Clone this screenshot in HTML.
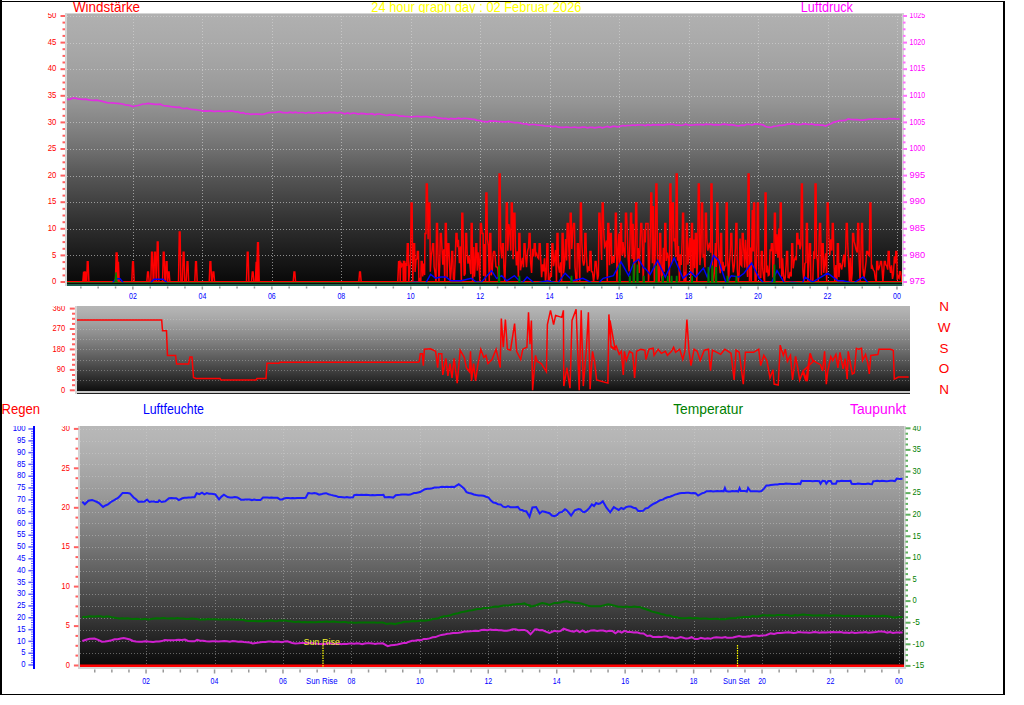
<!DOCTYPE html><html><head><meta charset="utf-8"><style>html,body{margin:0;padding:0;background:#fff;overflow:hidden}</style></head><body>
<svg width="1024" height="705" viewBox="0 0 1024 705" style="display:block">
<defs>
<linearGradient id="g1" x1="0" y1="0" x2="0" y2="1"><stop offset="0" stop-color="rgb(176,176,176)"/><stop offset="0.1" stop-color="rgb(170,170,170)"/><stop offset="0.2" stop-color="rgb(162,162,162)"/><stop offset="0.32" stop-color="rgb(150,150,150)"/><stop offset="0.42" stop-color="rgb(130,130,130)"/><stop offset="0.5" stop-color="rgb(112,112,112)"/><stop offset="0.59" stop-color="rgb(88,88,88)"/><stop offset="0.756" stop-color="rgb(52,52,52)"/><stop offset="0.9" stop-color="rgb(25,25,25)"/><stop offset="1" stop-color="rgb(8,8,8)"/></linearGradient>
<linearGradient id="g2" x1="0" y1="0" x2="0" y2="1"><stop offset="0.00" stop-color="rgb(182,182,182)"/><stop offset="0.05" stop-color="rgb(178,178,178)"/><stop offset="0.10" stop-color="rgb(173,173,173)"/><stop offset="0.15" stop-color="rgb(167,167,167)"/><stop offset="0.20" stop-color="rgb(161,161,161)"/><stop offset="0.25" stop-color="rgb(154,154,154)"/><stop offset="0.30" stop-color="rgb(146,146,146)"/><stop offset="0.35" stop-color="rgb(139,139,139)"/><stop offset="0.40" stop-color="rgb(130,130,130)"/><stop offset="0.45" stop-color="rgb(122,122,122)"/><stop offset="0.50" stop-color="rgb(113,113,113)"/><stop offset="0.55" stop-color="rgb(104,104,104)"/><stop offset="0.60" stop-color="rgb(95,95,95)"/><stop offset="0.65" stop-color="rgb(86,86,86)"/><stop offset="0.70" stop-color="rgb(76,76,76)"/><stop offset="0.75" stop-color="rgb(66,66,66)"/><stop offset="0.80" stop-color="rgb(56,56,56)"/><stop offset="0.85" stop-color="rgb(45,45,45)"/><stop offset="0.90" stop-color="rgb(35,35,35)"/><stop offset="0.95" stop-color="rgb(24,24,24)"/><stop offset="1.00" stop-color="rgb(14,14,14)"/></linearGradient>
<linearGradient id="g3" x1="0" y1="0" x2="0" y2="1"><stop offset="0.00" stop-color="rgb(184,184,184)"/><stop offset="0.05" stop-color="rgb(181,181,181)"/><stop offset="0.10" stop-color="rgb(176,176,176)"/><stop offset="0.15" stop-color="rgb(171,171,171)"/><stop offset="0.20" stop-color="rgb(165,165,165)"/><stop offset="0.25" stop-color="rgb(158,158,158)"/><stop offset="0.30" stop-color="rgb(151,151,151)"/><stop offset="0.35" stop-color="rgb(143,143,143)"/><stop offset="0.40" stop-color="rgb(135,135,135)"/><stop offset="0.45" stop-color="rgb(126,126,126)"/><stop offset="0.50" stop-color="rgb(117,117,117)"/><stop offset="0.55" stop-color="rgb(107,107,107)"/><stop offset="0.60" stop-color="rgb(97,97,97)"/><stop offset="0.65" stop-color="rgb(87,87,87)"/><stop offset="0.70" stop-color="rgb(77,77,77)"/><stop offset="0.75" stop-color="rgb(66,66,66)"/><stop offset="0.80" stop-color="rgb(55,55,55)"/><stop offset="0.85" stop-color="rgb(43,43,43)"/><stop offset="0.90" stop-color="rgb(32,32,32)"/><stop offset="0.95" stop-color="rgb(20,20,20)"/><stop offset="1.00" stop-color="rgb(8,8,8)"/></linearGradient>
<clipPath id="k1" clipPathUnits="userSpaceOnUse"><rect x="0" y="13" width="1024" height="300"/></clipPath>
<clipPath id="k2" clipPathUnits="userSpaceOnUse"><rect x="0" y="306" width="1024" height="100"/></clipPath>
<clipPath id="k3" clipPathUnits="userSpaceOnUse"><rect x="0" y="426" width="1024" height="270"/></clipPath>
<clipPath id="c1"><rect x="67" y="13" width="835" height="270"/></clipPath>
<clipPath id="c2"><rect x="77" y="306" width="833" height="85"/></clipPath>
<clipPath id="c3"><rect x="80" y="426" width="824" height="241"/></clipPath>
</defs>
<rect x="0" y="0" width="1024" height="705" fill="#fff"/>
<text x="72.9" y="12" fill="#ff0000" font-size="14.2" text-anchor="start" textLength="67.2" lengthAdjust="spacingAndGlyphs" font-family="Liberation Sans, sans-serif">Windstärke</text>
<text x="371.25" y="12" fill="#ffff00" font-size="14.2" text-anchor="start" textLength="210.25" lengthAdjust="spacingAndGlyphs" font-family="Liberation Sans, sans-serif">24 hour graph day : 02 Februar 2026</text>
<text x="800.8" y="12" fill="#ff00ff" font-size="14.2" text-anchor="start" textLength="52.1" lengthAdjust="spacingAndGlyphs" font-family="Liberation Sans, sans-serif">Luftdruck</text>
<rect x="65" y="13" width="839" height="273" fill="#d4d4d4"/>
<rect x="67" y="14" width="835" height="270" fill="url(#g1)"/>
<rect x="67" y="284" width="835" height="2" fill="#1b5e4e"/>
<g opacity="0.6">
<line x1="67" y1="255.5" x2="902" y2="255.5" stroke="#d8d8d8" stroke-dasharray="1 2"/>
<line x1="67" y1="229.5" x2="902" y2="229.5" stroke="#d8d8d8" stroke-dasharray="1 2"/>
<line x1="67" y1="202.5" x2="902" y2="202.5" stroke="#d8d8d8" stroke-dasharray="1 2"/>
<line x1="67" y1="176.5" x2="902" y2="176.5" stroke="#d8d8d8" stroke-dasharray="1 2"/>
<line x1="67" y1="149.5" x2="902" y2="149.5" stroke="#d8d8d8" stroke-dasharray="1 2"/>
<line x1="67" y1="122.5" x2="902" y2="122.5" stroke="#d8d8d8" stroke-dasharray="1 2"/>
<line x1="67" y1="96.5" x2="902" y2="96.5" stroke="#d8d8d8" stroke-dasharray="1 2"/>
<line x1="67" y1="69.5" x2="902" y2="69.5" stroke="#d8d8d8" stroke-dasharray="1 2"/>
<line x1="67" y1="43.5" x2="902" y2="43.5" stroke="#d8d8d8" stroke-dasharray="1 2"/>
<line x1="67" y1="16.5" x2="902" y2="16.5" stroke="#d8d8d8" stroke-dasharray="1 2"/>
<line x1="133.5" y1="13" x2="133.5" y2="283" stroke="#d8d8d8" stroke-dasharray="1 2"/>
<line x1="202.5" y1="13" x2="202.5" y2="283" stroke="#d8d8d8" stroke-dasharray="1 2"/>
<line x1="272.5" y1="13" x2="272.5" y2="283" stroke="#d8d8d8" stroke-dasharray="1 2"/>
<line x1="341.5" y1="13" x2="341.5" y2="283" stroke="#d8d8d8" stroke-dasharray="1 2"/>
<line x1="411.5" y1="13" x2="411.5" y2="283" stroke="#d8d8d8" stroke-dasharray="1 2"/>
<line x1="480.5" y1="13" x2="480.5" y2="283" stroke="#d8d8d8" stroke-dasharray="1 2"/>
<line x1="550.5" y1="13" x2="550.5" y2="283" stroke="#d8d8d8" stroke-dasharray="1 2"/>
<line x1="619.5" y1="13" x2="619.5" y2="283" stroke="#d8d8d8" stroke-dasharray="1 2"/>
<line x1="689.5" y1="13" x2="689.5" y2="283" stroke="#d8d8d8" stroke-dasharray="1 2"/>
<line x1="758.5" y1="13" x2="758.5" y2="283" stroke="#d8d8d8" stroke-dasharray="1 2"/>
<line x1="828.5" y1="13" x2="828.5" y2="283" stroke="#d8d8d8" stroke-dasharray="1 2"/>
<line x1="897.5" y1="13" x2="897.5" y2="283" stroke="#d8d8d8" stroke-dasharray="1 2"/>
</g>
<g fill="#ff6060">
<rect x="60.5" y="281.0" width="4.5" height="2"/>
<rect x="62.5" y="274.4" width="2.5" height="2"/>
<rect x="62.5" y="267.7" width="2.5" height="2"/>
<rect x="62.5" y="261.1" width="2.5" height="2"/>
<rect x="60.5" y="254.4" width="4.5" height="2"/>
<rect x="62.5" y="247.8" width="2.5" height="2"/>
<rect x="62.5" y="241.1" width="2.5" height="2"/>
<rect x="62.5" y="234.4" width="2.5" height="2"/>
<rect x="60.5" y="227.8" width="4.5" height="2"/>
<rect x="62.5" y="221.2" width="2.5" height="2"/>
<rect x="62.5" y="214.5" width="2.5" height="2"/>
<rect x="62.5" y="207.8" width="2.5" height="2"/>
<rect x="60.5" y="201.2" width="4.5" height="2"/>
<rect x="62.5" y="194.6" width="2.5" height="2"/>
<rect x="62.5" y="187.9" width="2.5" height="2"/>
<rect x="62.5" y="181.2" width="2.5" height="2"/>
<rect x="60.5" y="174.6" width="4.5" height="2"/>
<rect x="62.5" y="167.9" width="2.5" height="2"/>
<rect x="62.5" y="161.3" width="2.5" height="2"/>
<rect x="62.5" y="154.6" width="2.5" height="2"/>
<rect x="60.5" y="148.0" width="4.5" height="2"/>
<rect x="62.5" y="141.3" width="2.5" height="2"/>
<rect x="62.5" y="134.7" width="2.5" height="2"/>
<rect x="62.5" y="128.0" width="2.5" height="2"/>
<rect x="60.5" y="121.4" width="4.5" height="2"/>
<rect x="62.5" y="114.8" width="2.5" height="2"/>
<rect x="62.5" y="108.1" width="2.5" height="2"/>
<rect x="62.5" y="101.4" width="2.5" height="2"/>
<rect x="60.5" y="94.8" width="4.5" height="2"/>
<rect x="62.5" y="88.1" width="2.5" height="2"/>
<rect x="62.5" y="81.5" width="2.5" height="2"/>
<rect x="62.5" y="74.8" width="2.5" height="2"/>
<rect x="60.5" y="68.2" width="4.5" height="2"/>
<rect x="62.5" y="61.5" width="2.5" height="2"/>
<rect x="62.5" y="54.9" width="2.5" height="2"/>
<rect x="62.5" y="48.2" width="2.5" height="2"/>
<rect x="60.5" y="41.6" width="4.5" height="2"/>
<rect x="62.5" y="34.9" width="2.5" height="2"/>
<rect x="62.5" y="28.3" width="2.5" height="2"/>
<rect x="62.5" y="21.6" width="2.5" height="2"/>
<rect x="60.5" y="15.0" width="4.5" height="2"/>
</g>
<g fill="#ff70ff">
<rect x="903" y="281.0" width="4" height="2"/>
<rect x="903" y="274.4" width="2.5" height="2"/>
<rect x="903" y="267.7" width="2.5" height="2"/>
<rect x="903" y="261.1" width="2.5" height="2"/>
<rect x="903" y="254.4" width="4" height="2"/>
<rect x="903" y="247.8" width="2.5" height="2"/>
<rect x="903" y="241.1" width="2.5" height="2"/>
<rect x="903" y="234.4" width="2.5" height="2"/>
<rect x="903" y="227.8" width="4" height="2"/>
<rect x="903" y="221.2" width="2.5" height="2"/>
<rect x="903" y="214.5" width="2.5" height="2"/>
<rect x="903" y="207.8" width="2.5" height="2"/>
<rect x="903" y="201.2" width="4" height="2"/>
<rect x="903" y="194.6" width="2.5" height="2"/>
<rect x="903" y="187.9" width="2.5" height="2"/>
<rect x="903" y="181.2" width="2.5" height="2"/>
<rect x="903" y="174.6" width="4" height="2"/>
<rect x="903" y="167.9" width="2.5" height="2"/>
<rect x="903" y="161.3" width="2.5" height="2"/>
<rect x="903" y="154.6" width="2.5" height="2"/>
<rect x="903" y="148.0" width="4" height="2"/>
<rect x="903" y="141.3" width="2.5" height="2"/>
<rect x="903" y="134.7" width="2.5" height="2"/>
<rect x="903" y="128.0" width="2.5" height="2"/>
<rect x="903" y="121.4" width="4" height="2"/>
<rect x="903" y="114.8" width="2.5" height="2"/>
<rect x="903" y="108.1" width="2.5" height="2"/>
<rect x="903" y="101.4" width="2.5" height="2"/>
<rect x="903" y="94.8" width="4" height="2"/>
<rect x="903" y="88.1" width="2.5" height="2"/>
<rect x="903" y="81.5" width="2.5" height="2"/>
<rect x="903" y="74.8" width="2.5" height="2"/>
<rect x="903" y="68.2" width="4" height="2"/>
<rect x="903" y="61.5" width="2.5" height="2"/>
<rect x="903" y="54.9" width="2.5" height="2"/>
<rect x="903" y="48.2" width="2.5" height="2"/>
<rect x="903" y="41.6" width="4" height="2"/>
<rect x="903" y="34.9" width="2.5" height="2"/>
<rect x="903" y="28.3" width="2.5" height="2"/>
<rect x="903" y="21.6" width="2.5" height="2"/>
<rect x="903" y="15.0" width="4" height="2"/>
</g>
<text x="56.4" y="284.2" fill="#ff0000" font-size="9.2" text-anchor="end" textLength="4.35" lengthAdjust="spacingAndGlyphs" font-family="Liberation Sans, sans-serif" clip-path="url(#k1)">0</text>
<text x="909.6" y="284.2" fill="#ff00ff" font-size="9.2" text-anchor="start" textLength="15.5" lengthAdjust="spacingAndGlyphs" font-family="Liberation Sans, sans-serif" clip-path="url(#k1)">975</text>
<text x="56.4" y="257.6" fill="#ff0000" font-size="9.2" text-anchor="end" textLength="4.35" lengthAdjust="spacingAndGlyphs" font-family="Liberation Sans, sans-serif" clip-path="url(#k1)">5</text>
<text x="909.6" y="257.6" fill="#ff00ff" font-size="9.2" text-anchor="start" textLength="15.5" lengthAdjust="spacingAndGlyphs" font-family="Liberation Sans, sans-serif" clip-path="url(#k1)">980</text>
<text x="56.4" y="231.0" fill="#ff0000" font-size="9.2" text-anchor="end" textLength="8.7" lengthAdjust="spacingAndGlyphs" font-family="Liberation Sans, sans-serif" clip-path="url(#k1)">10</text>
<text x="909.6" y="231.0" fill="#ff00ff" font-size="9.2" text-anchor="start" textLength="15.5" lengthAdjust="spacingAndGlyphs" font-family="Liberation Sans, sans-serif" clip-path="url(#k1)">985</text>
<text x="56.4" y="204.4" fill="#ff0000" font-size="9.2" text-anchor="end" textLength="8.7" lengthAdjust="spacingAndGlyphs" font-family="Liberation Sans, sans-serif" clip-path="url(#k1)">15</text>
<text x="909.6" y="204.4" fill="#ff00ff" font-size="9.2" text-anchor="start" textLength="15.5" lengthAdjust="spacingAndGlyphs" font-family="Liberation Sans, sans-serif" clip-path="url(#k1)">990</text>
<text x="56.4" y="177.8" fill="#ff0000" font-size="9.2" text-anchor="end" textLength="8.7" lengthAdjust="spacingAndGlyphs" font-family="Liberation Sans, sans-serif" clip-path="url(#k1)">20</text>
<text x="909.6" y="177.8" fill="#ff00ff" font-size="9.2" text-anchor="start" textLength="15.5" lengthAdjust="spacingAndGlyphs" font-family="Liberation Sans, sans-serif" clip-path="url(#k1)">995</text>
<text x="56.4" y="151.2" fill="#ff0000" font-size="9.2" text-anchor="end" textLength="8.7" lengthAdjust="spacingAndGlyphs" font-family="Liberation Sans, sans-serif" clip-path="url(#k1)">25</text>
<text x="909.6" y="151.2" fill="#ff00ff" font-size="9.2" text-anchor="start" textLength="15.5" lengthAdjust="spacingAndGlyphs" font-family="Liberation Sans, sans-serif" clip-path="url(#k1)">1000</text>
<text x="56.4" y="124.6" fill="#ff0000" font-size="9.2" text-anchor="end" textLength="8.7" lengthAdjust="spacingAndGlyphs" font-family="Liberation Sans, sans-serif" clip-path="url(#k1)">30</text>
<text x="909.6" y="124.6" fill="#ff00ff" font-size="9.2" text-anchor="start" textLength="15.5" lengthAdjust="spacingAndGlyphs" font-family="Liberation Sans, sans-serif" clip-path="url(#k1)">1005</text>
<text x="56.4" y="98.0" fill="#ff0000" font-size="9.2" text-anchor="end" textLength="8.7" lengthAdjust="spacingAndGlyphs" font-family="Liberation Sans, sans-serif" clip-path="url(#k1)">35</text>
<text x="909.6" y="98.0" fill="#ff00ff" font-size="9.2" text-anchor="start" textLength="15.5" lengthAdjust="spacingAndGlyphs" font-family="Liberation Sans, sans-serif" clip-path="url(#k1)">1010</text>
<text x="56.4" y="71.4" fill="#ff0000" font-size="9.2" text-anchor="end" textLength="8.7" lengthAdjust="spacingAndGlyphs" font-family="Liberation Sans, sans-serif" clip-path="url(#k1)">40</text>
<text x="909.6" y="71.4" fill="#ff00ff" font-size="9.2" text-anchor="start" textLength="15.5" lengthAdjust="spacingAndGlyphs" font-family="Liberation Sans, sans-serif" clip-path="url(#k1)">1015</text>
<text x="56.4" y="44.8" fill="#ff0000" font-size="9.2" text-anchor="end" textLength="8.7" lengthAdjust="spacingAndGlyphs" font-family="Liberation Sans, sans-serif" clip-path="url(#k1)">45</text>
<text x="909.6" y="44.8" fill="#ff00ff" font-size="9.2" text-anchor="start" textLength="15.5" lengthAdjust="spacingAndGlyphs" font-family="Liberation Sans, sans-serif" clip-path="url(#k1)">1020</text>
<text x="56.4" y="18.2" fill="#ff0000" font-size="9.2" text-anchor="end" textLength="8.7" lengthAdjust="spacingAndGlyphs" font-family="Liberation Sans, sans-serif" clip-path="url(#k1)">50</text>
<text x="909.6" y="18.2" fill="#ff00ff" font-size="9.2" text-anchor="start" textLength="15.5" lengthAdjust="spacingAndGlyphs" font-family="Liberation Sans, sans-serif" clip-path="url(#k1)">1025</text>
<g fill="#999">
<rect x="80.1" y="286.5" width="1.5" height="2"/>
<rect x="97.4" y="286.5" width="1.5" height="2"/>
<rect x="114.8" y="286.5" width="1.5" height="2"/>
<rect x="132.1" y="286.5" width="1.5" height="3"/>
<rect x="149.5" y="286.5" width="1.5" height="2"/>
<rect x="166.9" y="286.5" width="1.5" height="2"/>
<rect x="184.2" y="286.5" width="1.5" height="2"/>
<rect x="201.6" y="286.5" width="1.5" height="3"/>
<rect x="219.0" y="286.5" width="1.5" height="2"/>
<rect x="236.3" y="286.5" width="1.5" height="2"/>
<rect x="253.7" y="286.5" width="1.5" height="2"/>
<rect x="271.1" y="286.5" width="1.5" height="3"/>
<rect x="288.4" y="286.5" width="1.5" height="2"/>
<rect x="305.8" y="286.5" width="1.5" height="2"/>
<rect x="323.2" y="286.5" width="1.5" height="2"/>
<rect x="340.5" y="286.5" width="1.5" height="3"/>
<rect x="357.9" y="286.5" width="1.5" height="2"/>
<rect x="375.3" y="286.5" width="1.5" height="2"/>
<rect x="392.6" y="286.5" width="1.5" height="2"/>
<rect x="410.0" y="286.5" width="1.5" height="3"/>
<rect x="427.4" y="286.5" width="1.5" height="2"/>
<rect x="444.7" y="286.5" width="1.5" height="2"/>
<rect x="462.1" y="286.5" width="1.5" height="2"/>
<rect x="479.4" y="286.5" width="1.5" height="3"/>
<rect x="496.8" y="286.5" width="1.5" height="2"/>
<rect x="514.2" y="286.5" width="1.5" height="2"/>
<rect x="531.5" y="286.5" width="1.5" height="2"/>
<rect x="548.9" y="286.5" width="1.5" height="3"/>
<rect x="566.3" y="286.5" width="1.5" height="2"/>
<rect x="583.6" y="286.5" width="1.5" height="2"/>
<rect x="601.0" y="286.5" width="1.5" height="2"/>
<rect x="618.4" y="286.5" width="1.5" height="3"/>
<rect x="635.7" y="286.5" width="1.5" height="2"/>
<rect x="653.1" y="286.5" width="1.5" height="2"/>
<rect x="670.5" y="286.5" width="1.5" height="2"/>
<rect x="687.8" y="286.5" width="1.5" height="3"/>
<rect x="705.2" y="286.5" width="1.5" height="2"/>
<rect x="722.6" y="286.5" width="1.5" height="2"/>
<rect x="739.9" y="286.5" width="1.5" height="2"/>
<rect x="757.3" y="286.5" width="1.5" height="3"/>
<rect x="774.7" y="286.5" width="1.5" height="2"/>
<rect x="792.0" y="286.5" width="1.5" height="2"/>
<rect x="809.4" y="286.5" width="1.5" height="2"/>
<rect x="826.8" y="286.5" width="1.5" height="3"/>
<rect x="844.1" y="286.5" width="1.5" height="2"/>
<rect x="861.5" y="286.5" width="1.5" height="2"/>
<rect x="878.8" y="286.5" width="1.5" height="2"/>
<rect x="896.2" y="286.5" width="1.5" height="3"/>
</g>
<text x="132.9" y="299" fill="#0000ff" font-size="9.2" text-anchor="middle" textLength="7.8" lengthAdjust="spacingAndGlyphs" font-family="Liberation Sans, sans-serif">02</text>
<text x="202.4" y="299" fill="#0000ff" font-size="9.2" text-anchor="middle" textLength="7.8" lengthAdjust="spacingAndGlyphs" font-family="Liberation Sans, sans-serif">04</text>
<text x="271.8" y="299" fill="#0000ff" font-size="9.2" text-anchor="middle" textLength="7.8" lengthAdjust="spacingAndGlyphs" font-family="Liberation Sans, sans-serif">06</text>
<text x="341.3" y="299" fill="#0000ff" font-size="9.2" text-anchor="middle" textLength="7.8" lengthAdjust="spacingAndGlyphs" font-family="Liberation Sans, sans-serif">08</text>
<text x="410.7" y="299" fill="#0000ff" font-size="9.2" text-anchor="middle" textLength="7.8" lengthAdjust="spacingAndGlyphs" font-family="Liberation Sans, sans-serif">10</text>
<text x="480.2" y="299" fill="#0000ff" font-size="9.2" text-anchor="middle" textLength="7.8" lengthAdjust="spacingAndGlyphs" font-family="Liberation Sans, sans-serif">12</text>
<text x="549.7" y="299" fill="#0000ff" font-size="9.2" text-anchor="middle" textLength="7.8" lengthAdjust="spacingAndGlyphs" font-family="Liberation Sans, sans-serif">14</text>
<text x="619.1" y="299" fill="#0000ff" font-size="9.2" text-anchor="middle" textLength="7.8" lengthAdjust="spacingAndGlyphs" font-family="Liberation Sans, sans-serif">16</text>
<text x="688.6" y="299" fill="#0000ff" font-size="9.2" text-anchor="middle" textLength="7.8" lengthAdjust="spacingAndGlyphs" font-family="Liberation Sans, sans-serif">18</text>
<text x="758.0" y="299" fill="#0000ff" font-size="9.2" text-anchor="middle" textLength="7.8" lengthAdjust="spacingAndGlyphs" font-family="Liberation Sans, sans-serif">20</text>
<text x="827.5" y="299" fill="#0000ff" font-size="9.2" text-anchor="middle" textLength="7.8" lengthAdjust="spacingAndGlyphs" font-family="Liberation Sans, sans-serif">22</text>
<text x="897.0" y="299" fill="#0000ff" font-size="9.2" text-anchor="middle" textLength="7.8" lengthAdjust="spacingAndGlyphs" font-family="Liberation Sans, sans-serif">00</text>
<g clip-path="url(#c1)">
<polyline points="67.0,282.0 82.8,282.0 83.6,271.9 84.3,282.0 84.4,271.9 85.1,271.9 85.2,282.0 85.9,271.9 86.5,282.0 86.7,282.0 87.3,261.8 88.1,261.8 88.9,282.0 115.4,282.0 116.2,252.2 116.8,282.0 117.0,252.2 117.6,261.8 117.8,282.0 118.4,261.8 119.2,282.0 131.8,282.0 132.6,261.8 133.4,261.8 134.2,282.0 146.8,282.0 147.6,271.9 148.4,271.9 149.2,282.0 150.8,282.0 151.6,252.2 152.4,252.2 153.2,282.0 153.8,282.0 154.6,252.2 155.4,252.2 156.2,282.0 156.5,282.0 157.3,242.1 158.1,242.1 158.9,282.0 162.5,282.0 163.3,252.2 164.1,252.2 164.9,282.0 165.4,282.0 166.2,261.8 167.0,261.8 167.5,282.0 167.8,282.0 168.3,271.9 169.1,271.9 169.9,282.0 178.5,282.0 179.3,232.0 180.1,232.0 180.9,282.0 182.4,282.0 183.2,252.2 184.0,252.2 184.8,282.0 186.3,282.0 187.1,261.8 187.9,261.8 188.7,282.0 194.8,282.0 195.6,261.8 196.4,261.8 197.2,282.0 209.2,282.0 210.0,261.8 210.8,261.8 211.6,282.0 212.2,282.0 213.0,271.9 213.8,271.9 214.6,282.0 246.5,282.0 247.3,252.2 248.1,252.2 248.9,282.0 251.5,282.0 252.3,271.9 253.1,271.9 253.9,282.0 255.4,282.0 256.2,261.8 256.8,282.0 257.0,261.8 257.6,242.1 257.8,282.0 258.4,242.1 259.2,282.0 293.2,282.0 294.0,271.9 294.8,271.9 295.6,282.0 358.8,282.0 359.6,271.9 360.4,271.9 361.2,282.0 365.0,282.0 397.0,282.0 397.8,282.0 398.6,261.8 399.4,261.8 399.7,261.5 400.2,282.0 400.7,261.5 401.1,267.5 402.1,264.1 403.0,264.5 403.3,282.0 403.5,261.5 404.1,261.8 404.5,261.5 404.9,261.8 404.9,282.0 405.7,282.0 405.9,264.1 406.8,264.8 407.3,243.8 408.3,243.8 408.7,282.0 409.7,270.4 410.6,260.2 411.1,203.1 412.1,203.1 412.8,282.0 413.6,243.8 414.6,243.8 415.1,271.9 416.0,259.7 417.0,258.9 417.4,251.4 418.4,251.4 418.9,282.0 419.8,277.8 420.8,282.0 421.2,261.5 422.2,261.5 422.7,276.4 423.6,263.5 424.6,275.1 425.0,233.6 426.0,233.6 426.3,184.1 427.3,184.1 428.1,239.2 428.8,203.1 429.8,203.1 430.3,271.8 431.2,256.5 432.2,250.1 432.6,243.8 433.6,243.8 434.1,266.8 435.1,273.6 436.0,282.0 436.5,223.5 437.5,223.5 437.9,253.2 438.9,282.0 439.8,263.8 440.3,233.6 441.3,233.6 441.8,244.7 442.8,264.6 443.8,249.2 444.8,282.0 445.3,223.5 446.3,223.5 447.1,277.5 447.9,243.8 448.9,243.8 449.3,257.7 450.3,282.0 451.2,269.7 451.7,251.4 452.7,251.4 453.3,278.7 454.3,282.0 455.4,254.9 456.0,233.6 457.0,233.6 457.5,247.2 458.4,239.8 459.4,263.1 460.4,246.4 461.4,282.0 461.8,213.3 462.8,213.3 463.3,245.5 464.2,275.7 465.2,273.5 465.6,233.6 466.6,233.6 467.1,252.9 468.0,263.7 468.9,255.5 469.9,264.6 470.8,274.1 471.2,223.5 472.2,223.5 472.6,282.0 473.6,246.9 474.5,276.7 475.4,261.4 475.8,243.8 476.8,243.8 477.2,270.7 478.1,252.3 479.0,264.9 479.9,282.0 480.4,223.5 481.4,223.5 482.1,233.6 483.1,233.6 483.6,275.9 484.5,243.9 485.5,282.0 485.9,193.0 486.9,193.0 487.4,239.5 488.4,245.9 489.3,282.0 489.8,233.6 490.8,233.6 491.2,275.2 492.2,271.5 493.1,253.8 493.6,251.4 494.6,251.4 495.0,254.4 495.9,266.7 496.9,266.9 497.8,268.8 498.7,282.0 499.1,174.0 500.1,174.0 500.7,247.2 501.8,258.5 502.4,243.8 503.4,243.8 503.9,267.6 504.8,282.0 505.8,253.7 506.3,203.1 507.3,203.1 507.8,250.8 508.8,224.0 509.8,231.2 510.8,250.6 511.3,203.1 512.3,203.1 513.1,259.3 513.9,213.3 514.9,213.3 515.4,246.6 516.4,265.5 517.4,251.4 518.4,276.7 518.9,233.6 519.9,233.6 520.5,270.3 521.5,263.7 522.5,257.9 523.5,267.3 524.0,243.8 525.0,243.8 525.5,255.0 526.5,267.2 527.6,250.9 528.6,247.6 529.1,233.6 530.1,233.6 530.6,261.9 531.6,273.0 532.6,248.8 533.7,256.5 534.2,243.8 535.2,243.8 535.7,255.3 536.7,253.7 537.7,257.3 538.7,258.6 539.2,243.8 540.2,243.8 540.7,258.2 541.6,277.3 542.6,264.3 543.6,271.3 544.5,258.4 545.5,282.0 546.4,271.1 546.9,243.8 547.9,243.8 548.4,282.0 549.4,282.0 550.4,272.5 551.4,277.1 551.9,243.8 552.9,243.8 553.5,266.2 554.5,259.7 555.5,249.9 556.5,282.0 557.0,233.6 558.0,233.6 558.5,266.1 559.5,272.6 560.6,262.3 561.6,282.0 562.1,233.6 563.1,233.6 563.6,273.4 564.6,263.7 565.6,239.1 566.6,260.5 567.2,223.5 568.2,223.5 568.7,245.3 569.7,269.3 570.2,213.3 571.2,213.3 571.8,249.1 572.9,229.7 573.5,223.5 574.5,223.5 575.0,267.2 575.9,278.1 576.9,282.0 577.3,243.8 578.3,243.8 578.8,258.9 579.8,282.0 580.4,203.1 581.4,203.1 581.8,241.8 582.7,260.0 583.6,265.6 584.5,262.1 584.9,233.6 585.9,233.6 586.4,256.0 587.5,272.4 588.5,266.5 589.5,270.9 590.0,251.4 591.0,251.4 591.5,271.7 592.5,271.9 593.6,282.0 594.6,272.5 595.1,261.5 596.1,261.5 596.5,266.8 597.5,279.7 598.4,275.4 598.9,213.3 599.9,213.3 600.5,231.1 601.6,260.0 602.2,203.1 603.2,203.1 603.6,228.7 604.6,247.0 605.5,245.2 606.4,240.5 607.3,282.0 607.8,223.5 608.8,223.5 609.5,265.2 610.3,233.6 611.3,233.6 611.8,263.8 612.8,256.1 613.9,262.8 614.9,253.7 615.4,213.3 616.4,213.3 616.9,282.0 617.9,254.3 618.9,233.5 619.9,275.4 620.5,223.5 621.5,223.5 622.0,255.6 623.0,242.1 624.0,253.0 625.0,257.6 625.5,213.3 626.5,213.3 627.1,227.1 628.1,258.4 629.1,271.4 630.1,236.0 630.6,213.3 631.6,213.3 632.1,259.0 633.1,223.8 634.2,282.0 635.2,244.2 635.7,203.1 636.7,203.1 637.2,260.3 638.2,248.0 639.2,272.9 640.3,236.8 640.8,223.5 641.8,223.5 642.3,244.3 643.3,282.0 644.3,229.2 645.3,242.5 645.8,223.5 646.8,223.5 647.0,223.5 648.0,223.5 648.5,282.0 649.4,265.6 650.4,230.4 650.8,193.0 651.8,193.0 652.4,263.3 653.4,206.1 654.4,282.0 655.4,242.9 655.9,184.1 656.9,184.1 657.4,252.5 658.3,282.0 659.3,282.0 659.7,233.6 660.7,233.6 661.2,274.3 662.3,282.0 663.3,247.7 664.3,271.8 664.8,223.5 665.8,223.5 666.3,261.0 667.3,252.6 668.4,258.2 669.4,282.0 669.9,184.1 670.9,184.1 671.6,264.3 672.4,203.1 673.4,203.1 673.9,241.4 674.8,238.2 675.8,257.1 676.2,174.0 677.2,174.0 677.6,260.8 678.5,246.0 679.4,282.0 680.4,254.2 681.3,265.0 682.2,238.2 682.6,213.3 683.6,213.3 684.0,282.0 685.0,271.8 685.9,282.0 686.4,223.5 687.4,223.5 687.9,264.7 688.9,253.1 689.9,237.9 690.9,282.0 691.5,223.5 692.5,223.5 692.9,275.0 693.9,239.4 694.8,268.3 695.3,233.6 696.3,233.6 696.8,282.0 697.8,250.8 698.3,184.1 699.3,184.1 699.9,265.1 701.0,251.2 701.6,203.1 702.6,203.1 703.1,256.4 704.0,255.5 705.0,267.4 705.4,213.3 706.4,213.3 706.8,238.6 707.8,250.7 708.7,246.0 709.6,242.8 710.6,252.8 711.0,184.1 712.0,184.1 712.5,282.0 713.4,282.0 714.4,271.6 715.4,243.0 716.4,274.1 716.8,203.1 717.8,203.1 718.3,241.8 719.2,260.1 720.2,273.2 720.6,233.6 721.6,233.6 722.1,270.8 723.0,261.9 723.9,271.1 724.9,266.2 725.8,265.8 726.2,203.1 727.2,203.1 727.6,258.0 728.6,282.0 729.5,262.5 730.4,249.9 730.8,233.6 731.8,233.6 732.3,258.4 733.3,272.5 734.3,265.6 735.4,248.2 735.9,223.5 736.9,223.5 737.3,269.2 738.2,282.0 739.1,274.1 740.0,238.5 740.9,264.8 741.8,265.9 742.2,233.6 743.2,233.6 743.7,248.7 744.7,267.6 745.6,239.8 746.6,260.1 747.6,276.9 748.1,174.0 749.1,174.0 749.5,282.0 750.4,247.6 751.3,282.0 752.3,210.1 753.2,251.5 753.6,203.1 754.6,203.1 755.1,282.0 756.0,282.0 757.0,242.4 757.4,203.1 758.4,203.1 758.9,277.6 759.8,277.7 760.8,277.4 761.3,251.4 762.3,251.4 762.7,268.7 763.7,277.6 764.6,282.0 765.1,193.0 766.1,193.0 766.5,272.6 767.4,265.6 768.3,275.5 769.2,274.8 770.1,249.3 771.0,251.3 771.4,243.8 772.4,243.8 772.9,277.6 773.9,262.9 774.4,213.3 775.4,213.3 775.9,253.9 776.9,234.3 777.9,257.8 778.8,228.6 779.8,268.6 780.3,203.1 781.3,203.1 781.7,276.7 782.6,258.4 783.5,275.7 784.4,282.0 785.3,276.8 786.2,264.4 786.6,251.4 787.6,251.4 788.1,277.4 789.2,277.7 790.2,271.8 791.2,276.5 791.7,243.8 792.7,243.8 793.2,268.3 794.2,260.7 795.3,257.7 796.3,260.2 796.8,233.6 797.8,233.6 798.2,244.7 799.1,239.3 800.0,249.3 800.9,244.9 801.4,184.1 802.4,184.1 802.9,269.9 803.9,282.0 804.9,263.5 805.9,262.4 806.4,223.5 807.4,223.5 807.9,282.0 809.0,260.7 809.5,243.8 810.5,243.8 810.9,282.0 811.8,282.0 812.8,282.0 813.7,251.2 814.6,259.0 815.1,184.1 816.1,184.1 816.5,255.6 817.4,260.3 818.3,282.0 819.2,236.4 819.6,223.5 820.6,223.5 821.4,275.2 822.2,243.8 823.2,243.8 823.7,272.8 824.7,264.2 825.7,253.3 826.7,282.0 827.2,203.1 828.2,203.1 828.8,232.2 829.8,255.3 830.8,239.3 831.8,250.6 832.3,223.5 833.3,223.5 833.8,259.5 834.8,282.0 835.9,265.0 836.9,282.0 837.4,243.8 838.4,243.8 838.9,277.1 839.9,263.1 840.9,265.9 841.8,269.5 842.8,260.5 843.8,254.6 844.8,267.1 845.8,247.4 846.3,223.5 847.3,223.5 847.7,243.4 848.6,261.3 849.5,282.0 850.4,257.7 851.3,282.0 852.2,273.2 852.6,233.6 853.6,233.6 854.1,241.4 855.2,245.5 856.2,250.1 857.2,252.4 857.7,223.5 858.7,223.5 859.1,258.1 860.1,282.0 861.1,248.0 861.5,223.5 862.5,223.5 863.0,269.2 864.0,278.3 865.1,269.3 866.1,261.3 866.6,251.4 867.6,251.4 868.2,254.3 869.3,255.7 869.9,203.1 870.9,203.1 871.4,268.7 872.3,266.5 873.3,270.0 874.3,271.2 875.3,278.6 876.3,282.0 876.7,261.5 877.7,261.5 878.2,270.2 879.1,268.0 880.1,264.4 880.5,261.5 881.5,261.5 882.0,267.9 882.9,282.0 883.9,268.7 884.3,261.5 885.3,261.5 885.8,264.9 886.8,265.9 887.7,269.7 888.2,251.4 889.2,251.4 889.6,266.0 890.6,272.9 891.5,265.3 892.5,278.9 893.4,274.5 894.4,256.3 895.3,263.5 895.8,251.4 896.8,251.4 897.2,280.0 898.2,276.3 899.1,277.8 899.6,271.7 900.6,271.7 902.0,282.0" fill="none" stroke="#ff0000" stroke-width="1.5"/>
<rect x="67" y="281" width="835" height="2" fill="#ff0000"/>
<polyline points="67.0,283.5 112.0,283.5 116.0,278.7 120.0,278.7 124.0,283.5 150.0,283.5 154.0,279.2 163.0,279.2 168.0,283.5 398.0,283.5 405.2,283.5 415.4,282.1 425.5,283.5 430.6,274.4 435.7,278.3 440.8,277.0 445.8,277.0 450.9,280.8 461.1,280.8 471.2,278.3 476.3,282.1 481.4,282.1 491.5,270.6 496.6,278.3 501.7,275.7 506.8,280.8 514.4,275.7 522.0,283.3 527.1,277.0 534.7,283.5 547.4,280.8 557.5,283.3 565.1,273.2 572.7,280.8 582.9,278.3 593.0,283.3 598.1,283.5 603.2,278.3 613.4,275.7 621.0,261.8 628.6,275.7 633.7,263.0 638.7,259.2 643.8,268.1 645.0,268.1 650.1,274.4 657.7,260.5 665.3,277.0 674.2,257.9 683.1,278.3 690.7,271.9 695.8,277.0 703.4,268.1 707.2,277.0 713.5,255.4 718.6,260.5 726.2,283.3 731.3,275.7 738.9,277.0 744.0,273.2 751.6,263.0 759.2,278.3 764.3,283.5 771.9,282.1 777.0,270.6 784.6,283.3 792.2,282.1 802.4,283.3 804.9,277.0 812.5,282.1 827.7,273.2 837.9,280.8 843.0,280.8 853.1,283.3 863.3,277.0 868.4,283.3 878.5,283.5 904.9,283.5" fill="none" stroke="#0000ff" stroke-width="1.4"/>
<polyline points="67.0,283.0 115.0,283.0 116.0,272.4 117.0,283.0 498.6,283.0 498.9,266.3 499.3,266.3 499.6,283.0 518.9,283.0 519.2,276.5 519.6,276.5 519.9,283.0 571.0,283.0 571.3,276.5 571.7,276.5 572.0,283.0 619.2,283.0 619.5,265.1 619.9,265.1 620.2,283.0 629.3,283.0 629.6,276.5 630.0,276.5 630.3,283.0 633.2,283.0 633.5,265.1 633.9,265.1 634.2,283.0 637.0,283.0 637.3,265.1 637.7,265.1 638.0,283.0 643.3,283.0 643.6,276.5 644.0,276.5 644.3,283.0 655.9,283.0 656.2,266.3 656.6,266.3 656.9,283.0 662.3,283.0 662.6,276.5 663.0,276.5 663.3,283.0 667.3,283.0 667.6,276.5 668.0,276.5 668.3,283.0 671.1,283.0 671.4,276.5 671.8,276.5 672.1,283.0 676.2,283.0 676.5,276.5 676.9,276.5 677.2,283.0 691.5,283.0 691.8,276.5 692.2,276.5 692.5,283.0 708.0,283.0 708.3,267.6 708.7,267.6 709.0,283.0 711.8,283.0 712.1,266.3 712.5,266.3 712.8,283.0 715.6,283.0 715.9,267.6 716.3,267.6 716.6,283.0 727.0,283.0 727.3,276.5 727.7,276.5 728.0,283.0 735.9,283.0 736.2,276.5 736.6,276.5 736.9,283.0 773.9,283.0 774.2,265.1 774.6,265.1 774.9,283.0 902.0,283.0" fill="none" stroke="#008000" stroke-width="1.4"/>
<polyline points="67.0,99.3 69.8,99.3 72.5,98.1 75.2,98.1 78.0,98.9 80.6,99.1 83.2,99.3 85.9,99.1 88.5,99.8 91.1,100.1 93.8,100.3 96.4,100.1 99.0,100.7 101.6,101.1 104.2,101.9 106.8,102.6 109.5,103.0 112.1,102.9 114.7,103.2 117.3,103.4 119.9,103.6 122.5,104.0 125.2,104.9 127.8,105.2 130.4,105.6 133.0,106.7 135.5,105.8 138.0,105.5 140.5,104.7 143.0,104.0 145.5,104.0 148.0,103.4 151.5,103.8 155.0,104.4 157.7,104.4 160.3,104.2 163.0,105.5 165.7,105.8 168.3,106.1 171.0,106.7 173.7,106.9 176.3,107.3 179.0,107.2 181.7,108.3 184.3,108.7 187.0,108.1 189.7,109.2 192.3,109.5 195.0,109.6 197.7,110.0 200.3,110.3 203.0,111.2 205.5,110.8 208.0,111.2 210.5,110.7 213.0,111.4 215.5,111.4 218.0,111.0 220.5,111.1 223.0,111.6 225.5,111.4 228.0,111.2 230.5,110.9 233.0,111.1 235.5,111.9 238.0,111.7 240.5,113.0 243.0,112.6 245.5,113.8 248.0,113.5 250.5,114.3 253.0,114.1 255.5,114.0 258.0,114.1 260.5,114.4 263.0,114.4 265.9,113.5 268.8,112.7 271.6,112.5 274.5,112.4 277.1,112.1 279.7,111.6 282.3,112.6 284.9,112.6 287.6,112.9 290.2,112.1 292.8,112.9 295.4,112.2 298.0,113.0 300.6,112.5 303.2,112.5 305.9,113.3 308.5,112.3 311.1,112.8 313.8,113.2 316.4,112.5 319.0,112.5 321.6,113.3 324.2,112.7 326.9,113.1 329.5,112.2 332.1,112.6 334.8,112.4 337.4,113.0 340.0,112.3 344.9,113.9 347.6,112.9 350.3,113.8 353.0,113.0 355.7,113.4 358.4,114.1 361.1,113.4 363.9,113.6 366.6,114.2 369.3,114.0 372.0,113.6 374.7,114.8 377.2,114.0 379.8,114.0 382.3,114.5 384.9,115.0 387.4,115.3 390.0,114.7 392.6,115.1 395.1,114.9 397.7,115.5 400.2,116.1 402.8,116.2 405.3,116.5 407.9,116.5 410.4,116.8 413.1,116.7 415.7,116.5 418.4,116.3 421.0,116.9 423.7,116.6 426.3,116.5 429.0,117.0 431.6,117.6 434.3,116.8 437.2,117.8 440.2,118.1 443.2,118.7 445.8,118.3 448.4,119.3 451.0,118.4 453.6,118.9 456.2,118.6 458.8,118.1 461.4,118.8 464.0,118.3 466.7,118.5 469.3,118.8 471.9,119.2 474.5,119.4 477.1,120.4 479.7,120.5 482.3,121.4 484.9,121.6 487.5,121.8 490.2,120.9 492.8,121.2 495.5,121.1 498.1,121.5 500.8,121.7 503.4,121.9 506.1,121.9 508.7,121.4 511.7,122.1 514.7,122.7 517.7,122.5 520.6,123.1 523.6,124.0 526.3,123.9 528.9,124.8 531.6,124.5 534.2,124.5 536.9,124.9 539.5,125.2 542.2,125.4 544.8,126.0 547.5,126.1 550.2,126.1 552.9,126.6 555.6,126.2 558.3,127.2 561.0,127.4 563.7,127.3 566.4,127.0 569.1,127.3 571.8,127.5 574.5,127.0 577.2,127.6 579.8,127.6 582.3,127.2 584.8,127.0 587.3,127.8 589.8,127.3 592.4,127.4 594.9,127.8 597.4,127.4 599.9,127.0 602.5,127.8 605.0,127.0 607.5,126.5 610.0,127.3 612.5,126.4 615.1,126.4 617.6,126.9 620.1,126.4 622.7,125.5 625.2,125.8 627.7,125.5 630.3,125.4 632.8,125.0 635.3,125.4 637.8,124.8 640.4,125.0 642.9,125.0 645.4,125.6 647.9,124.6 650.5,125.3 653.0,124.6 655.5,125.0 658.0,124.7 660.6,124.8 663.1,125.1 665.6,124.7 668.1,124.4 670.6,124.4 673.2,124.3 675.7,125.2 678.2,125.0 680.7,125.4 683.3,125.0 685.8,124.2 688.3,125.0 690.8,125.1 693.3,125.0 695.9,124.7 698.4,124.5 700.9,124.6 703.4,124.9 706.0,124.2 708.5,124.5 711.0,124.4 713.5,124.9 716.1,124.7 718.6,124.8 721.1,124.6 723.6,124.2 726.1,124.3 728.7,124.8 731.2,124.7 733.7,125.1 736.2,125.6 738.9,125.8 741.5,125.2 744.2,125.3 746.8,124.3 749.5,124.5 752.1,125.1 754.8,123.9 757.4,124.1 760.2,124.3 762.9,124.9 765.6,126.5 768.3,127.2 771.1,127.4 773.8,126.3 776.6,126.0 779.4,125.4 782.2,125.4 784.9,124.9 787.7,124.1 790.4,124.2 793.1,123.7 795.8,124.3 798.5,124.7 801.2,124.5 803.9,123.7 806.5,124.2 809.2,124.5 811.9,123.9 814.7,124.9 817.4,124.6 820.1,125.2 822.8,125.1 825.6,126.0 828.2,124.8 830.9,123.7 833.5,122.3 836.1,121.7 839.2,120.6 842.2,120.7 845.2,120.4 848.3,119.0 851.3,119.5 854.3,119.6 857.3,119.7 860.4,120.2 863.4,120.2 866.4,119.6 869.5,119.0 872.5,119.3 875.2,118.5 877.9,119.0 880.7,118.9 883.4,119.1 886.1,119.2 888.8,118.4 891.6,118.9 894.3,118.6 897.0,119.0 899.7,118.8" fill="none" stroke="#e030e0" stroke-width="1.7"/>
</g>
<rect x="75" y="306" width="835" height="88" fill="#d4d4d4"/>
<rect x="77" y="306" width="833" height="85" fill="url(#g2)"/>
<rect x="77" y="391" width="833" height="2" fill="#c8c8c8"/>
<rect x="77" y="393" width="833" height="1" fill="#202020"/>
<g opacity="0.35">
<line x1="77" y1="380.5" x2="910" y2="380.5" stroke="#d8d8d8" stroke-dasharray="1 2"/>
<line x1="77" y1="370.5" x2="910" y2="370.5" stroke="#d8d8d8" stroke-dasharray="1 2"/>
<line x1="77" y1="360.5" x2="910" y2="360.5" stroke="#d8d8d8" stroke-dasharray="1 2"/>
<line x1="77" y1="349.5" x2="910" y2="349.5" stroke="#d8d8d8" stroke-dasharray="1 2"/>
<line x1="77" y1="339.5" x2="910" y2="339.5" stroke="#d8d8d8" stroke-dasharray="1 2"/>
<line x1="77" y1="329.5" x2="910" y2="329.5" stroke="#d8d8d8" stroke-dasharray="1 2"/>
<line x1="77" y1="319.5" x2="910" y2="319.5" stroke="#d8d8d8" stroke-dasharray="1 2"/>
</g>
<g fill="#ff6060">
<rect x="69.8" y="389.3" width="5" height="2"/>
<rect x="72" y="384.2" width="3" height="2"/>
<rect x="72" y="379.1" width="3" height="2"/>
<rect x="72" y="374.0" width="3" height="2"/>
<rect x="69.8" y="368.9" width="5" height="2"/>
<rect x="72" y="363.8" width="3" height="2"/>
<rect x="72" y="358.7" width="3" height="2"/>
<rect x="72" y="353.6" width="3" height="2"/>
<rect x="69.8" y="348.4" width="5" height="2"/>
<rect x="72" y="343.3" width="3" height="2"/>
<rect x="72" y="338.2" width="3" height="2"/>
<rect x="72" y="333.1" width="3" height="2"/>
<rect x="69.8" y="328.0" width="5" height="2"/>
<rect x="72" y="322.9" width="3" height="2"/>
<rect x="72" y="317.8" width="3" height="2"/>
<rect x="72" y="312.7" width="3" height="2"/>
<rect x="69.8" y="307.6" width="5" height="2"/>
</g>
<text x="65.2" y="392.5" fill="#ff0000" font-size="9.2" text-anchor="end" textLength="4.2" lengthAdjust="spacingAndGlyphs" font-family="Liberation Sans, sans-serif" clip-path="url(#k2)">0</text>
<text x="65.2" y="372.1" fill="#ff0000" font-size="9.2" text-anchor="end" textLength="8.4" lengthAdjust="spacingAndGlyphs" font-family="Liberation Sans, sans-serif" clip-path="url(#k2)">90</text>
<text x="65.2" y="351.6" fill="#ff0000" font-size="9.2" text-anchor="end" textLength="12.600000000000001" lengthAdjust="spacingAndGlyphs" font-family="Liberation Sans, sans-serif" clip-path="url(#k2)">180</text>
<text x="65.2" y="331.2" fill="#ff0000" font-size="9.2" text-anchor="end" textLength="12.600000000000001" lengthAdjust="spacingAndGlyphs" font-family="Liberation Sans, sans-serif" clip-path="url(#k2)">270</text>
<text x="65.2" y="310.8" fill="#ff0000" font-size="9.2" text-anchor="end" textLength="12.600000000000001" lengthAdjust="spacingAndGlyphs" font-family="Liberation Sans, sans-serif" clip-path="url(#k2)">360</text>
<text x="944" y="311.0" fill="#ff0000" font-size="13.5" text-anchor="middle" font-family="Liberation Sans, sans-serif">N</text>
<text x="944" y="331.8" fill="#ff0000" font-size="13.5" text-anchor="middle" font-family="Liberation Sans, sans-serif">W</text>
<text x="944" y="352.6" fill="#ff0000" font-size="13.5" text-anchor="middle" font-family="Liberation Sans, sans-serif">S</text>
<text x="944" y="373.4" fill="#ff0000" font-size="13.5" text-anchor="middle" font-family="Liberation Sans, sans-serif">O</text>
<text x="944" y="394.2" fill="#ff0000" font-size="13.5" text-anchor="middle" font-family="Liberation Sans, sans-serif">N</text>
<g clip-path="url(#c2)">
<polyline points="77.0,319.9 161.7,319.9 162.5,330.8 166.5,330.8 167.5,355.4 175.6,355.4 176.6,364.0 188.6,364.0 190.0,357.0 192.0,357.0 193.5,377.5 196.0,378.5 220.0,378.5 221.0,380.0 256.0,380.0 257.0,378.5 266.0,378.5 267.0,363.2 279.0,363.2 280.0,362.3 418.6,362.3 419.2,361.5 420.3,353.7 422.3,353.7 423.3,365.6 424.4,349.2 430.5,348.8 435.6,351.3 437.7,367.7 438.7,353.7 441.8,353.7 442.8,374.9 445.9,358.4 447.9,375.9 450.0,363.6 452.0,377.9 454.1,358.4 457.2,383.1 460.2,350.2 464.3,357.4 466.4,367.7 469.5,371.8 470.5,351.3 471.5,381.0 473.6,363.6 475.6,381.0 477.7,365.6 480.8,349.2 483.8,357.4 485.9,355.4 487.9,363.6 492.0,359.5 496.1,349.2 500.2,367.7 501.3,318.5 503.3,347.2 505.4,319.5 507.4,349.2 510.5,350.2 514.6,323.6 516.6,351.3 520.7,359.5 522.8,349.2 526.9,347.2 528.5,312.3 530.0,344.1 531.4,320.5 532.6,390.2 535.5,355.4 537.2,361.5 541.3,363.6 546.4,371.8 547.4,324.6 550.5,310.3 553.6,324.6 555.6,315.4 561.8,317.4 563.4,310.3 563.8,386.1 566.9,367.7 570.0,388.2 572.0,320.5 576.1,309.2 579.2,390.2 581.2,310.3 583.3,386.1 586.4,349.2 588.4,312.3 590.1,389.2 592.5,351.3 594.6,361.5 596.6,380.0 607.9,383.1 608.9,314.4 611.0,346.1 615.1,349.2 610.0,320.5 611.0,347.2 614.1,349.2 616.2,346.1 619.2,354.3 621.3,351.3 623.3,374.9 624.4,351.3 626.4,360.5 629.5,351.3 632.6,353.3 634.6,377.9 636.7,351.3 640.8,349.2 644.9,350.2 645.9,359.5 649.0,349.2 653.1,348.2 654.1,355.4 658.2,349.2 661.3,353.3 665.4,351.3 667.4,355.4 671.5,351.3 673.6,347.2 675.6,352.3 679.7,349.2 682.8,359.5 684.9,351.3 686.9,319.5 689.0,351.3 691.0,365.6 694.1,349.2 697.2,351.3 700.2,360.5 704.3,350.2 708.4,349.2 710.5,370.8 712.5,350.2 720.7,354.3 724.8,349.2 731.0,353.3 734.1,380.0 736.1,350.2 739.2,352.3 743.3,384.1 745.4,352.3 753.6,352.3 758.7,349.2 760.7,365.6 763.8,355.4 766.9,360.5 770.0,377.9 773.0,369.7 774.1,384.1 778.2,385.1 780.2,345.1 783.3,355.4 785.3,349.2 787.4,361.5 790.5,355.4 792.5,380.0 795.6,356.4 797.7,367.7 799.7,380.0 802.8,371.8 805.9,381.0 810.0,353.3 813.0,361.5 803.1,370.9 807.2,381.1 810.3,353.4 812.3,359.6 816.4,362.7 820.5,364.7 822.6,370.9 824.6,351.4 826.3,384.2 827.7,371.9 830.8,356.5 832.8,360.6 835.9,354.5 837.9,367.8 840.0,352.4 843.1,368.8 845.1,358.6 847.2,379.1 848.2,351.4 852.3,374.0 854.3,372.9 856.4,348.3 858.4,349.3 861.5,348.3 862.6,360.6 865.6,354.5 867.7,362.7 869.3,374.0 870.8,355.5 877.9,354.5 879.0,349.3 890.2,349.3 893.3,350.4 894.3,379.1 898.4,377.0 908.7,377.0" fill="none" stroke="#ff0000" stroke-width="1.5"/>
</g>
<rect x="78" y="426" width="828" height="243" fill="#d4d4d4"/>
<rect x="80" y="426" width="824" height="241" fill="url(#g3)"/>
<g opacity="0.4">
<line x1="80" y1="653.5" x2="904" y2="653.5" stroke="#d8d8d8" stroke-dasharray="1 2"/>
<line x1="80" y1="641.5" x2="904" y2="641.5" stroke="#d8d8d8" stroke-dasharray="1 2"/>
<line x1="80" y1="630.5" x2="904" y2="630.5" stroke="#d8d8d8" stroke-dasharray="1 2"/>
<line x1="80" y1="618.5" x2="904" y2="618.5" stroke="#d8d8d8" stroke-dasharray="1 2"/>
<line x1="80" y1="606.5" x2="904" y2="606.5" stroke="#d8d8d8" stroke-dasharray="1 2"/>
<line x1="80" y1="594.5" x2="904" y2="594.5" stroke="#d8d8d8" stroke-dasharray="1 2"/>
<line x1="80" y1="582.5" x2="904" y2="582.5" stroke="#d8d8d8" stroke-dasharray="1 2"/>
<line x1="80" y1="571.5" x2="904" y2="571.5" stroke="#d8d8d8" stroke-dasharray="1 2"/>
<line x1="80" y1="559.5" x2="904" y2="559.5" stroke="#d8d8d8" stroke-dasharray="1 2"/>
<line x1="80" y1="547.5" x2="904" y2="547.5" stroke="#d8d8d8" stroke-dasharray="1 2"/>
<line x1="80" y1="535.5" x2="904" y2="535.5" stroke="#d8d8d8" stroke-dasharray="1 2"/>
<line x1="80" y1="523.5" x2="904" y2="523.5" stroke="#d8d8d8" stroke-dasharray="1 2"/>
<line x1="80" y1="512.5" x2="904" y2="512.5" stroke="#d8d8d8" stroke-dasharray="1 2"/>
<line x1="80" y1="500.5" x2="904" y2="500.5" stroke="#d8d8d8" stroke-dasharray="1 2"/>
<line x1="80" y1="488.5" x2="904" y2="488.5" stroke="#d8d8d8" stroke-dasharray="1 2"/>
<line x1="80" y1="476.5" x2="904" y2="476.5" stroke="#d8d8d8" stroke-dasharray="1 2"/>
<line x1="80" y1="464.5" x2="904" y2="464.5" stroke="#d8d8d8" stroke-dasharray="1 2"/>
<line x1="80" y1="453.5" x2="904" y2="453.5" stroke="#d8d8d8" stroke-dasharray="1 2"/>
<line x1="80" y1="441.5" x2="904" y2="441.5" stroke="#d8d8d8" stroke-dasharray="1 2"/>
<line x1="80" y1="429.5" x2="904" y2="429.5" stroke="#d8d8d8" stroke-dasharray="1 2"/>
<line x1="146.5" y1="426" x2="146.5" y2="667" stroke="#d8d8d8" stroke-dasharray="1 2"/>
<line x1="215.5" y1="426" x2="215.5" y2="667" stroke="#d8d8d8" stroke-dasharray="1 2"/>
<line x1="283.5" y1="426" x2="283.5" y2="667" stroke="#d8d8d8" stroke-dasharray="1 2"/>
<line x1="351.5" y1="426" x2="351.5" y2="667" stroke="#d8d8d8" stroke-dasharray="1 2"/>
<line x1="420.5" y1="426" x2="420.5" y2="667" stroke="#d8d8d8" stroke-dasharray="1 2"/>
<line x1="488.5" y1="426" x2="488.5" y2="667" stroke="#d8d8d8" stroke-dasharray="1 2"/>
<line x1="557.5" y1="426" x2="557.5" y2="667" stroke="#d8d8d8" stroke-dasharray="1 2"/>
<line x1="625.5" y1="426" x2="625.5" y2="667" stroke="#d8d8d8" stroke-dasharray="1 2"/>
<line x1="694.5" y1="426" x2="694.5" y2="667" stroke="#d8d8d8" stroke-dasharray="1 2"/>
<line x1="762.5" y1="426" x2="762.5" y2="667" stroke="#d8d8d8" stroke-dasharray="1 2"/>
<line x1="830.5" y1="426" x2="830.5" y2="667" stroke="#d8d8d8" stroke-dasharray="1 2"/>
<line x1="899.5" y1="426" x2="899.5" y2="667" stroke="#d8d8d8" stroke-dasharray="1 2"/>
</g>
<g fill="#ff6060">
<rect x="73.9" y="664.5" width="4.5" height="2"/>
<rect x="75.5" y="654.6" width="2.5" height="2"/>
<rect x="75.5" y="644.8" width="2.5" height="2"/>
<rect x="75.5" y="634.9" width="2.5" height="2"/>
<rect x="73.9" y="625.1" width="4.5" height="2"/>
<rect x="75.5" y="615.2" width="2.5" height="2"/>
<rect x="75.5" y="605.4" width="2.5" height="2"/>
<rect x="75.5" y="595.5" width="2.5" height="2"/>
<rect x="73.9" y="585.6" width="4.5" height="2"/>
<rect x="75.5" y="575.8" width="2.5" height="2"/>
<rect x="75.5" y="565.9" width="2.5" height="2"/>
<rect x="75.5" y="556.1" width="2.5" height="2"/>
<rect x="73.9" y="546.2" width="4.5" height="2"/>
<rect x="75.5" y="536.3" width="2.5" height="2"/>
<rect x="75.5" y="526.5" width="2.5" height="2"/>
<rect x="75.5" y="516.6" width="2.5" height="2"/>
<rect x="73.9" y="506.8" width="4.5" height="2"/>
<rect x="75.5" y="496.9" width="2.5" height="2"/>
<rect x="75.5" y="487.1" width="2.5" height="2"/>
<rect x="75.5" y="477.2" width="2.5" height="2"/>
<rect x="73.9" y="467.3" width="4.5" height="2"/>
<rect x="75.5" y="457.5" width="2.5" height="2"/>
<rect x="75.5" y="447.6" width="2.5" height="2"/>
<rect x="75.5" y="437.8" width="2.5" height="2"/>
<rect x="73.9" y="427.9" width="4.5" height="2"/>
</g>
<text x="70" y="667.7" fill="#ff0000" font-size="9.2" text-anchor="end" textLength="4.2" lengthAdjust="spacingAndGlyphs" font-family="Liberation Sans, sans-serif" clip-path="url(#k3)">0</text>
<text x="70" y="628.3" fill="#ff0000" font-size="9.2" text-anchor="end" textLength="4.2" lengthAdjust="spacingAndGlyphs" font-family="Liberation Sans, sans-serif" clip-path="url(#k3)">5</text>
<text x="70" y="588.8" fill="#ff0000" font-size="9.2" text-anchor="end" textLength="8.4" lengthAdjust="spacingAndGlyphs" font-family="Liberation Sans, sans-serif" clip-path="url(#k3)">10</text>
<text x="70" y="549.4" fill="#ff0000" font-size="9.2" text-anchor="end" textLength="8.4" lengthAdjust="spacingAndGlyphs" font-family="Liberation Sans, sans-serif" clip-path="url(#k3)">15</text>
<text x="70" y="510.0" fill="#ff0000" font-size="9.2" text-anchor="end" textLength="8.4" lengthAdjust="spacingAndGlyphs" font-family="Liberation Sans, sans-serif" clip-path="url(#k3)">20</text>
<text x="70" y="470.5" fill="#ff0000" font-size="9.2" text-anchor="end" textLength="8.4" lengthAdjust="spacingAndGlyphs" font-family="Liberation Sans, sans-serif" clip-path="url(#k3)">25</text>
<text x="70" y="431.1" fill="#ff0000" font-size="9.2" text-anchor="end" textLength="8.4" lengthAdjust="spacingAndGlyphs" font-family="Liberation Sans, sans-serif" clip-path="url(#k3)">30</text>
<g fill="#60b060">
<rect x="905.5" y="664.9" width="5" height="2"/>
<rect x="905.5" y="659.5" width="2.5" height="2"/>
<rect x="905.5" y="654.1" width="2.5" height="2"/>
<rect x="905.5" y="648.7" width="2.5" height="2"/>
<rect x="905.5" y="643.3" width="5" height="2"/>
<rect x="905.5" y="637.9" width="2.5" height="2"/>
<rect x="905.5" y="632.5" width="2.5" height="2"/>
<rect x="905.5" y="627.1" width="2.5" height="2"/>
<rect x="905.5" y="621.7" width="5" height="2"/>
<rect x="905.5" y="616.3" width="2.5" height="2"/>
<rect x="905.5" y="610.9" width="2.5" height="2"/>
<rect x="905.5" y="605.5" width="2.5" height="2"/>
<rect x="905.5" y="600.1" width="5" height="2"/>
<rect x="905.5" y="594.7" width="2.5" height="2"/>
<rect x="905.5" y="589.3" width="2.5" height="2"/>
<rect x="905.5" y="583.9" width="2.5" height="2"/>
<rect x="905.5" y="578.5" width="5" height="2"/>
<rect x="905.5" y="573.1" width="2.5" height="2"/>
<rect x="905.5" y="567.7" width="2.5" height="2"/>
<rect x="905.5" y="562.3" width="2.5" height="2"/>
<rect x="905.5" y="556.9" width="5" height="2"/>
<rect x="905.5" y="551.5" width="2.5" height="2"/>
<rect x="905.5" y="546.1" width="2.5" height="2"/>
<rect x="905.5" y="540.7" width="2.5" height="2"/>
<rect x="905.5" y="535.3" width="5" height="2"/>
<rect x="905.5" y="529.9" width="2.5" height="2"/>
<rect x="905.5" y="524.5" width="2.5" height="2"/>
<rect x="905.5" y="519.1" width="2.5" height="2"/>
<rect x="905.5" y="513.7" width="5" height="2"/>
<rect x="905.5" y="508.3" width="2.5" height="2"/>
<rect x="905.5" y="502.9" width="2.5" height="2"/>
<rect x="905.5" y="497.5" width="2.5" height="2"/>
<rect x="905.5" y="492.1" width="5" height="2"/>
<rect x="905.5" y="486.7" width="2.5" height="2"/>
<rect x="905.5" y="481.3" width="2.5" height="2"/>
<rect x="905.5" y="475.9" width="2.5" height="2"/>
<rect x="905.5" y="470.5" width="5" height="2"/>
<rect x="905.5" y="465.1" width="2.5" height="2"/>
<rect x="905.5" y="459.7" width="2.5" height="2"/>
<rect x="905.5" y="454.3" width="2.5" height="2"/>
<rect x="905.5" y="448.9" width="5" height="2"/>
<rect x="905.5" y="443.5" width="2.5" height="2"/>
<rect x="905.5" y="438.1" width="2.5" height="2"/>
<rect x="905.5" y="432.7" width="2.5" height="2"/>
<rect x="905.5" y="427.3" width="5" height="2"/>
</g>
<text x="912.5" y="668.1" fill="#008000" font-size="9.2" text-anchor="start" textLength="11.600000000000001" lengthAdjust="spacingAndGlyphs" font-family="Liberation Sans, sans-serif" clip-path="url(#k3)">-15</text>
<text x="912.5" y="646.5" fill="#008000" font-size="9.2" text-anchor="start" textLength="11.600000000000001" lengthAdjust="spacingAndGlyphs" font-family="Liberation Sans, sans-serif" clip-path="url(#k3)">-10</text>
<text x="912.5" y="624.9" fill="#008000" font-size="9.2" text-anchor="start" textLength="7.4" lengthAdjust="spacingAndGlyphs" font-family="Liberation Sans, sans-serif" clip-path="url(#k3)">-5</text>
<text x="912.5" y="603.3" fill="#008000" font-size="9.2" text-anchor="start" textLength="4.2" lengthAdjust="spacingAndGlyphs" font-family="Liberation Sans, sans-serif" clip-path="url(#k3)">0</text>
<text x="912.5" y="581.7" fill="#008000" font-size="9.2" text-anchor="start" textLength="4.2" lengthAdjust="spacingAndGlyphs" font-family="Liberation Sans, sans-serif" clip-path="url(#k3)">5</text>
<text x="912.5" y="560.1" fill="#008000" font-size="9.2" text-anchor="start" textLength="8.4" lengthAdjust="spacingAndGlyphs" font-family="Liberation Sans, sans-serif" clip-path="url(#k3)">10</text>
<text x="912.5" y="538.5" fill="#008000" font-size="9.2" text-anchor="start" textLength="8.4" lengthAdjust="spacingAndGlyphs" font-family="Liberation Sans, sans-serif" clip-path="url(#k3)">15</text>
<text x="912.5" y="516.9" fill="#008000" font-size="9.2" text-anchor="start" textLength="8.4" lengthAdjust="spacingAndGlyphs" font-family="Liberation Sans, sans-serif" clip-path="url(#k3)">20</text>
<text x="912.5" y="495.3" fill="#008000" font-size="9.2" text-anchor="start" textLength="8.4" lengthAdjust="spacingAndGlyphs" font-family="Liberation Sans, sans-serif" clip-path="url(#k3)">25</text>
<text x="912.5" y="473.7" fill="#008000" font-size="9.2" text-anchor="start" textLength="8.4" lengthAdjust="spacingAndGlyphs" font-family="Liberation Sans, sans-serif" clip-path="url(#k3)">30</text>
<text x="912.5" y="452.1" fill="#008000" font-size="9.2" text-anchor="start" textLength="8.4" lengthAdjust="spacingAndGlyphs" font-family="Liberation Sans, sans-serif" clip-path="url(#k3)">35</text>
<text x="912.5" y="430.5" fill="#008000" font-size="9.2" text-anchor="start" textLength="8.4" lengthAdjust="spacingAndGlyphs" font-family="Liberation Sans, sans-serif" clip-path="url(#k3)">40</text>
<rect x="33" y="426" width="2" height="243" fill="#0000ff"/>
<g fill="#6060ff">
<rect x="28.4" y="664.2" width="4.6" height="1.5"/>
<rect x="31" y="662.1" width="2" height="1"/>
<rect x="31" y="659.8" width="2" height="1"/>
<rect x="31" y="657.4" width="2" height="1"/>
<rect x="31" y="655.1" width="2" height="1"/>
<rect x="28.4" y="652.5" width="4.6" height="1.5"/>
<rect x="31" y="650.3" width="2" height="1"/>
<rect x="31" y="648.0" width="2" height="1"/>
<rect x="31" y="645.6" width="2" height="1"/>
<rect x="31" y="643.3" width="2" height="1"/>
<rect x="28.4" y="640.6" width="4.6" height="1.5"/>
<rect x="31" y="638.5" width="2" height="1"/>
<rect x="31" y="636.2" width="2" height="1"/>
<rect x="31" y="633.8" width="2" height="1"/>
<rect x="31" y="631.5" width="2" height="1"/>
<rect x="28.4" y="628.9" width="4.6" height="1.5"/>
<rect x="31" y="626.7" width="2" height="1"/>
<rect x="31" y="624.4" width="2" height="1"/>
<rect x="31" y="622.0" width="2" height="1"/>
<rect x="31" y="619.7" width="2" height="1"/>
<rect x="28.4" y="617.0" width="4.6" height="1.5"/>
<rect x="31" y="614.9" width="2" height="1"/>
<rect x="31" y="612.6" width="2" height="1"/>
<rect x="31" y="610.2" width="2" height="1"/>
<rect x="31" y="607.9" width="2" height="1"/>
<rect x="28.4" y="605.2" width="4.6" height="1.5"/>
<rect x="31" y="603.1" width="2" height="1"/>
<rect x="31" y="600.8" width="2" height="1"/>
<rect x="31" y="598.4" width="2" height="1"/>
<rect x="31" y="596.1" width="2" height="1"/>
<rect x="28.4" y="593.5" width="4.6" height="1.5"/>
<rect x="31" y="591.3" width="2" height="1"/>
<rect x="31" y="589.0" width="2" height="1"/>
<rect x="31" y="586.6" width="2" height="1"/>
<rect x="31" y="584.3" width="2" height="1"/>
<rect x="28.4" y="581.6" width="4.6" height="1.5"/>
<rect x="31" y="579.5" width="2" height="1"/>
<rect x="31" y="577.2" width="2" height="1"/>
<rect x="31" y="574.8" width="2" height="1"/>
<rect x="31" y="572.5" width="2" height="1"/>
<rect x="28.4" y="569.9" width="4.6" height="1.5"/>
<rect x="31" y="567.7" width="2" height="1"/>
<rect x="31" y="565.4" width="2" height="1"/>
<rect x="31" y="563.0" width="2" height="1"/>
<rect x="31" y="560.7" width="2" height="1"/>
<rect x="28.4" y="558.0" width="4.6" height="1.5"/>
<rect x="31" y="555.9" width="2" height="1"/>
<rect x="31" y="553.6" width="2" height="1"/>
<rect x="31" y="551.2" width="2" height="1"/>
<rect x="31" y="548.9" width="2" height="1"/>
<rect x="28.4" y="546.2" width="4.6" height="1.5"/>
<rect x="31" y="544.1" width="2" height="1"/>
<rect x="31" y="541.8" width="2" height="1"/>
<rect x="31" y="539.4" width="2" height="1"/>
<rect x="31" y="537.1" width="2" height="1"/>
<rect x="28.4" y="534.5" width="4.6" height="1.5"/>
<rect x="31" y="532.3" width="2" height="1"/>
<rect x="31" y="530.0" width="2" height="1"/>
<rect x="31" y="527.6" width="2" height="1"/>
<rect x="31" y="525.3" width="2" height="1"/>
<rect x="28.4" y="522.6" width="4.6" height="1.5"/>
<rect x="31" y="520.5" width="2" height="1"/>
<rect x="31" y="518.2" width="2" height="1"/>
<rect x="31" y="515.8" width="2" height="1"/>
<rect x="31" y="513.5" width="2" height="1"/>
<rect x="28.4" y="510.9" width="4.6" height="1.5"/>
<rect x="31" y="508.7" width="2" height="1"/>
<rect x="31" y="506.4" width="2" height="1"/>
<rect x="31" y="504.0" width="2" height="1"/>
<rect x="31" y="501.7" width="2" height="1"/>
<rect x="28.4" y="499.1" width="4.6" height="1.5"/>
<rect x="31" y="496.9" width="2" height="1"/>
<rect x="31" y="494.6" width="2" height="1"/>
<rect x="31" y="492.2" width="2" height="1"/>
<rect x="31" y="489.9" width="2" height="1"/>
<rect x="28.4" y="487.2" width="4.6" height="1.5"/>
<rect x="31" y="485.1" width="2" height="1"/>
<rect x="31" y="482.8" width="2" height="1"/>
<rect x="31" y="480.4" width="2" height="1"/>
<rect x="31" y="478.1" width="2" height="1"/>
<rect x="28.4" y="475.5" width="4.6" height="1.5"/>
<rect x="31" y="473.3" width="2" height="1"/>
<rect x="31" y="471.0" width="2" height="1"/>
<rect x="31" y="468.6" width="2" height="1"/>
<rect x="31" y="466.3" width="2" height="1"/>
<rect x="28.4" y="463.6" width="4.6" height="1.5"/>
<rect x="31" y="461.5" width="2" height="1"/>
<rect x="31" y="459.2" width="2" height="1"/>
<rect x="31" y="456.8" width="2" height="1"/>
<rect x="31" y="454.5" width="2" height="1"/>
<rect x="28.4" y="451.9" width="4.6" height="1.5"/>
<rect x="31" y="449.7" width="2" height="1"/>
<rect x="31" y="447.4" width="2" height="1"/>
<rect x="31" y="445.0" width="2" height="1"/>
<rect x="31" y="442.7" width="2" height="1"/>
<rect x="28.4" y="440.1" width="4.6" height="1.5"/>
<rect x="31" y="437.9" width="2" height="1"/>
<rect x="31" y="435.6" width="2" height="1"/>
<rect x="31" y="433.2" width="2" height="1"/>
<rect x="31" y="430.9" width="2" height="1"/>
<rect x="28.4" y="428.2" width="4.6" height="1.5"/>
</g>
<text x="25.6" y="667.2" fill="#0000ff" font-size="9.2" text-anchor="end" textLength="4.3" lengthAdjust="spacingAndGlyphs" font-family="Liberation Sans, sans-serif" clip-path="url(#k3)">0</text>
<text x="25.6" y="655.4" fill="#0000ff" font-size="9.2" text-anchor="end" textLength="4.3" lengthAdjust="spacingAndGlyphs" font-family="Liberation Sans, sans-serif" clip-path="url(#k3)">5</text>
<text x="25.6" y="643.6" fill="#0000ff" font-size="9.2" text-anchor="end" textLength="8.6" lengthAdjust="spacingAndGlyphs" font-family="Liberation Sans, sans-serif" clip-path="url(#k3)">10</text>
<text x="25.6" y="631.8" fill="#0000ff" font-size="9.2" text-anchor="end" textLength="8.6" lengthAdjust="spacingAndGlyphs" font-family="Liberation Sans, sans-serif" clip-path="url(#k3)">15</text>
<text x="25.6" y="620.0" fill="#0000ff" font-size="9.2" text-anchor="end" textLength="8.6" lengthAdjust="spacingAndGlyphs" font-family="Liberation Sans, sans-serif" clip-path="url(#k3)">20</text>
<text x="25.6" y="608.2" fill="#0000ff" font-size="9.2" text-anchor="end" textLength="8.6" lengthAdjust="spacingAndGlyphs" font-family="Liberation Sans, sans-serif" clip-path="url(#k3)">25</text>
<text x="25.6" y="596.4" fill="#0000ff" font-size="9.2" text-anchor="end" textLength="8.6" lengthAdjust="spacingAndGlyphs" font-family="Liberation Sans, sans-serif" clip-path="url(#k3)">30</text>
<text x="25.6" y="584.6" fill="#0000ff" font-size="9.2" text-anchor="end" textLength="8.6" lengthAdjust="spacingAndGlyphs" font-family="Liberation Sans, sans-serif" clip-path="url(#k3)">35</text>
<text x="25.6" y="572.8" fill="#0000ff" font-size="9.2" text-anchor="end" textLength="8.6" lengthAdjust="spacingAndGlyphs" font-family="Liberation Sans, sans-serif" clip-path="url(#k3)">40</text>
<text x="25.6" y="561.0" fill="#0000ff" font-size="9.2" text-anchor="end" textLength="8.6" lengthAdjust="spacingAndGlyphs" font-family="Liberation Sans, sans-serif" clip-path="url(#k3)">45</text>
<text x="25.6" y="549.2" fill="#0000ff" font-size="9.2" text-anchor="end" textLength="8.6" lengthAdjust="spacingAndGlyphs" font-family="Liberation Sans, sans-serif" clip-path="url(#k3)">50</text>
<text x="25.6" y="537.4" fill="#0000ff" font-size="9.2" text-anchor="end" textLength="8.6" lengthAdjust="spacingAndGlyphs" font-family="Liberation Sans, sans-serif" clip-path="url(#k3)">55</text>
<text x="25.6" y="525.6" fill="#0000ff" font-size="9.2" text-anchor="end" textLength="8.6" lengthAdjust="spacingAndGlyphs" font-family="Liberation Sans, sans-serif" clip-path="url(#k3)">60</text>
<text x="25.6" y="513.8" fill="#0000ff" font-size="9.2" text-anchor="end" textLength="8.6" lengthAdjust="spacingAndGlyphs" font-family="Liberation Sans, sans-serif" clip-path="url(#k3)">65</text>
<text x="25.6" y="502.0" fill="#0000ff" font-size="9.2" text-anchor="end" textLength="8.6" lengthAdjust="spacingAndGlyphs" font-family="Liberation Sans, sans-serif" clip-path="url(#k3)">70</text>
<text x="25.6" y="490.2" fill="#0000ff" font-size="9.2" text-anchor="end" textLength="8.6" lengthAdjust="spacingAndGlyphs" font-family="Liberation Sans, sans-serif" clip-path="url(#k3)">75</text>
<text x="25.6" y="478.4" fill="#0000ff" font-size="9.2" text-anchor="end" textLength="8.6" lengthAdjust="spacingAndGlyphs" font-family="Liberation Sans, sans-serif" clip-path="url(#k3)">80</text>
<text x="25.6" y="466.6" fill="#0000ff" font-size="9.2" text-anchor="end" textLength="8.6" lengthAdjust="spacingAndGlyphs" font-family="Liberation Sans, sans-serif" clip-path="url(#k3)">85</text>
<text x="25.6" y="454.8" fill="#0000ff" font-size="9.2" text-anchor="end" textLength="8.6" lengthAdjust="spacingAndGlyphs" font-family="Liberation Sans, sans-serif" clip-path="url(#k3)">90</text>
<text x="25.6" y="443.0" fill="#0000ff" font-size="9.2" text-anchor="end" textLength="8.6" lengthAdjust="spacingAndGlyphs" font-family="Liberation Sans, sans-serif" clip-path="url(#k3)">95</text>
<text x="25.6" y="431.2" fill="#0000ff" font-size="9.2" text-anchor="end" textLength="12.899999999999999" lengthAdjust="spacingAndGlyphs" font-family="Liberation Sans, sans-serif" clip-path="url(#k3)">100</text>
<g fill="#999">
<rect x="94.0" y="669.5" width="1.5" height="3"/>
<rect x="111.1" y="669.5" width="1.5" height="3"/>
<rect x="128.2" y="669.5" width="1.5" height="3"/>
<rect x="145.3" y="669.5" width="1.5" height="4"/>
<rect x="162.5" y="669.5" width="1.5" height="3"/>
<rect x="179.6" y="669.5" width="1.5" height="3"/>
<rect x="196.7" y="669.5" width="1.5" height="3"/>
<rect x="213.8" y="669.5" width="1.5" height="4"/>
<rect x="230.9" y="669.5" width="1.5" height="3"/>
<rect x="248.0" y="669.5" width="1.5" height="3"/>
<rect x="265.1" y="669.5" width="1.5" height="3"/>
<rect x="282.2" y="669.5" width="1.5" height="4"/>
<rect x="299.3" y="669.5" width="1.5" height="3"/>
<rect x="316.4" y="669.5" width="1.5" height="3"/>
<rect x="333.6" y="669.5" width="1.5" height="3"/>
<rect x="350.7" y="669.5" width="1.5" height="4"/>
<rect x="367.8" y="669.5" width="1.5" height="3"/>
<rect x="384.9" y="669.5" width="1.5" height="3"/>
<rect x="402.0" y="669.5" width="1.5" height="3"/>
<rect x="419.1" y="669.5" width="1.5" height="4"/>
<rect x="436.2" y="669.5" width="1.5" height="3"/>
<rect x="453.3" y="669.5" width="1.5" height="3"/>
<rect x="470.4" y="669.5" width="1.5" height="3"/>
<rect x="487.5" y="669.5" width="1.5" height="4"/>
<rect x="504.7" y="669.5" width="1.5" height="3"/>
<rect x="521.8" y="669.5" width="1.5" height="3"/>
<rect x="538.9" y="669.5" width="1.5" height="3"/>
<rect x="556.0" y="669.5" width="1.5" height="4"/>
<rect x="573.1" y="669.5" width="1.5" height="3"/>
<rect x="590.2" y="669.5" width="1.5" height="3"/>
<rect x="607.3" y="669.5" width="1.5" height="3"/>
<rect x="624.4" y="669.5" width="1.5" height="4"/>
<rect x="641.5" y="669.5" width="1.5" height="3"/>
<rect x="658.6" y="669.5" width="1.5" height="3"/>
<rect x="675.8" y="669.5" width="1.5" height="3"/>
<rect x="692.9" y="669.5" width="1.5" height="4"/>
<rect x="710.0" y="669.5" width="1.5" height="3"/>
<rect x="727.1" y="669.5" width="1.5" height="3"/>
<rect x="744.2" y="669.5" width="1.5" height="3"/>
<rect x="761.3" y="669.5" width="1.5" height="4"/>
<rect x="778.4" y="669.5" width="1.5" height="3"/>
<rect x="795.5" y="669.5" width="1.5" height="3"/>
<rect x="812.6" y="669.5" width="1.5" height="3"/>
<rect x="829.7" y="669.5" width="1.5" height="4"/>
<rect x="846.9" y="669.5" width="1.5" height="3"/>
<rect x="864.0" y="669.5" width="1.5" height="3"/>
<rect x="881.1" y="669.5" width="1.5" height="3"/>
<rect x="898.2" y="669.5" width="1.5" height="4"/>
</g>
<text x="146.1" y="683.5" fill="#0000ff" font-size="9.2" text-anchor="middle" textLength="7.8" lengthAdjust="spacingAndGlyphs" font-family="Liberation Sans, sans-serif">02</text>
<text x="214.5" y="683.5" fill="#0000ff" font-size="9.2" text-anchor="middle" textLength="7.8" lengthAdjust="spacingAndGlyphs" font-family="Liberation Sans, sans-serif">04</text>
<text x="283.0" y="683.5" fill="#0000ff" font-size="9.2" text-anchor="middle" textLength="7.8" lengthAdjust="spacingAndGlyphs" font-family="Liberation Sans, sans-serif">06</text>
<text x="351.4" y="683.5" fill="#0000ff" font-size="9.2" text-anchor="middle" textLength="7.8" lengthAdjust="spacingAndGlyphs" font-family="Liberation Sans, sans-serif">08</text>
<text x="419.9" y="683.5" fill="#0000ff" font-size="9.2" text-anchor="middle" textLength="7.8" lengthAdjust="spacingAndGlyphs" font-family="Liberation Sans, sans-serif">10</text>
<text x="488.3" y="683.5" fill="#0000ff" font-size="9.2" text-anchor="middle" textLength="7.8" lengthAdjust="spacingAndGlyphs" font-family="Liberation Sans, sans-serif">12</text>
<text x="556.7" y="683.5" fill="#0000ff" font-size="9.2" text-anchor="middle" textLength="7.8" lengthAdjust="spacingAndGlyphs" font-family="Liberation Sans, sans-serif">14</text>
<text x="625.2" y="683.5" fill="#0000ff" font-size="9.2" text-anchor="middle" textLength="7.8" lengthAdjust="spacingAndGlyphs" font-family="Liberation Sans, sans-serif">16</text>
<text x="693.6" y="683.5" fill="#0000ff" font-size="9.2" text-anchor="middle" textLength="7.8" lengthAdjust="spacingAndGlyphs" font-family="Liberation Sans, sans-serif">18</text>
<text x="762.1" y="683.5" fill="#0000ff" font-size="9.2" text-anchor="middle" textLength="7.8" lengthAdjust="spacingAndGlyphs" font-family="Liberation Sans, sans-serif">20</text>
<text x="830.5" y="683.5" fill="#0000ff" font-size="9.2" text-anchor="middle" textLength="7.8" lengthAdjust="spacingAndGlyphs" font-family="Liberation Sans, sans-serif">22</text>
<text x="898.9" y="683.5" fill="#0000ff" font-size="9.2" text-anchor="middle" textLength="7.8" lengthAdjust="spacingAndGlyphs" font-family="Liberation Sans, sans-serif">00</text>
<text x="1.5" y="414" fill="#ff0000" font-size="14.2" text-anchor="start" textLength="38.5" lengthAdjust="spacingAndGlyphs" font-family="Liberation Sans, sans-serif">Regen</text>
<text x="142.9" y="414" fill="#0000ff" font-size="14.2" text-anchor="start" textLength="61.1" lengthAdjust="spacingAndGlyphs" font-family="Liberation Sans, sans-serif">Luftfeuchte</text>
<text x="673.2" y="414" fill="#008000" font-size="14.2" text-anchor="start" textLength="69.8" lengthAdjust="spacingAndGlyphs" font-family="Liberation Sans, sans-serif">Temperatur</text>
<text x="850" y="414" fill="#ff00ff" font-size="14.2" text-anchor="start" textLength="56.2" lengthAdjust="spacingAndGlyphs" font-family="Liberation Sans, sans-serif">Taupunkt</text>
<g clip-path="url(#c3)">
<polyline points="82.3,617.1 86.0,616.9 89.6,616.3 92.4,616.5 95.1,616.6 97.9,616.2 100.6,616.2 103.4,616.9 106.1,616.5 108.9,616.6 111.6,617.3 116.5,618.1 119.3,618.4 122.1,618.3 124.9,618.5 127.7,618.2 130.5,618.7 133.2,619.0 136.0,618.8 139.1,619.1 142.1,619.2 145.2,618.8 148.2,619.5 151.2,619.1 154.1,618.6 157.0,618.2 160.0,618.6 162.9,618.1 165.8,618.3 168.8,618.4 171.7,618.2 174.6,618.4 177.5,618.0 180.3,618.5 183.1,618.4 185.9,618.9 188.7,619.1 191.5,618.6 194.3,618.8 197.1,619.1 199.8,619.7 202.5,619.2 205.2,619.4 207.9,619.1 210.6,619.3 213.3,619.2 216.1,619.2 218.8,619.4 221.5,619.4 224.4,619.6 227.3,619.4 230.3,619.6 233.2,619.6 236.1,619.7 239.4,619.8 242.6,619.8 245.9,620.8 248.8,621.0 251.8,621.1 254.7,621.0 257.6,621.3 260.5,621.0 263.3,621.4 266.0,621.1 268.7,620.8 271.4,620.6 274.1,621.1 276.8,621.2 279.5,620.4 282.2,620.8 285.0,620.4 287.4,621.0 290.3,621.2 293.1,621.8 295.9,622.0 298.8,621.5 301.6,622.2 304.5,621.9 307.4,622.3 310.2,621.9 313.1,622.3 316.0,622.3 318.9,621.8 321.7,622.1 324.4,621.7 327.1,621.5 329.7,622.0 332.4,621.6 335.1,621.8 337.7,622.1 340.4,622.3 343.0,622.0 345.7,622.0 348.4,622.7 351.0,622.3 353.7,622.8 356.3,622.8 359.0,622.4 361.6,622.4 364.3,622.5 366.9,622.6 369.5,622.5 372.2,622.5 374.8,622.6 377.5,622.8 380.1,622.5 382.8,622.4 386.4,623.9 389.3,623.5 392.1,623.5 395.0,624.1 398.0,623.2 401.1,622.8 404.1,621.8 407.2,621.7 410.0,621.6 412.8,621.0 415.6,621.3 418.3,621.1 421.1,620.5 423.9,620.8 426.7,620.5 429.6,620.0 432.6,619.1 435.5,618.8 438.4,618.2 441.4,617.0 444.2,616.3 446.9,616.1 449.7,615.6 452.5,614.4 455.3,613.8 458.1,613.2 460.9,612.3 463.7,611.8 466.6,611.2 469.4,610.6 472.3,610.3 475.1,609.5 478.0,608.9 480.9,608.9 483.8,607.9 486.8,607.9 489.7,607.7 492.6,606.9 495.5,606.5 498.3,606.7 501.2,605.9 504.0,605.5 506.9,605.4 509.7,605.3 512.7,604.5 515.6,604.3 518.5,604.0 521.4,604.0 524.4,603.4 527.2,604.8 530.0,605.4 530.5,606.5 533.4,605.9 536.3,605.2 539.3,604.0 542.2,603.0 545.9,603.7 549.5,604.9 554.4,602.9 557.5,603.0 560.5,602.6 563.6,601.7 566.6,601.3 569.7,602.2 572.7,602.5 575.8,603.0 578.8,603.1 581.9,603.7 584.9,604.6 588.0,605.8 591.0,606.2 594.3,606.2 597.5,606.3 600.8,606.3 604.5,605.1 608.1,604.3 611.8,604.9 615.4,606.0 618.2,606.8 620.9,606.8 623.6,606.9 626.3,606.5 629.0,607.0 631.7,607.0 634.4,606.5 637.2,607.0 639.9,607.1 642.9,608.2 646.0,609.3 649.0,610.3 652.1,611.6 655.0,612.3 657.9,612.9 660.9,614.0 663.8,614.5 666.7,615.6 669.6,615.5 672.6,616.7 675.5,617.0 678.4,617.7 681.4,618.2 684.2,618.3 686.9,618.1 689.7,617.8 692.5,618.5 695.3,618.1 698.1,618.3 700.9,618.7 703.6,618.6 706.3,618.6 709.0,619.1 711.7,618.9 714.5,618.7 717.2,618.7 719.9,619.2 722.6,619.0 725.3,619.3 728.1,618.6 731.0,618.2 733.8,618.2 736.6,618.1 737.5,617.6 740.7,617.5 743.9,617.0 746.8,616.9 749.7,616.9 752.6,616.1 755.4,616.5 758.2,616.5 761.0,615.8 761.9,615.2 764.5,615.2 767.0,615.4 769.6,615.3 772.1,615.4 774.7,615.6 777.2,615.0 779.8,615.0 782.3,615.1 784.9,615.1 787.4,615.1 790.0,615.8 792.6,615.7 795.1,615.1 797.7,615.4 802.5,614.5 805.8,614.8 809.0,615.0 812.3,615.5 814.9,615.5 817.4,615.4 819.9,615.2 822.5,615.4 825.0,615.3 827.6,615.6 830.1,615.8 832.7,615.6 835.2,615.4 837.8,615.5 840.3,615.6 842.9,615.9 845.4,616.0 848.0,615.8 850.5,616.1 853.1,616.0 855.6,615.9 858.2,615.9 860.7,616.0 863.3,616.2 865.8,616.0 868.4,616.3 870.9,616.1 873.8,615.9 876.8,616.2 879.7,616.3 882.6,615.8 885.5,616.1 889.2,616.6 892.9,617.4 896.1,617.5 899.4,617.0 902.6,617.1" fill="none" stroke="#007000" stroke-width="2"/>
<polyline points="82.3,641.0 86.0,639.7 89.6,638.7 94.5,638.5 98.2,639.9 101.9,641.7 105.1,641.6 108.4,640.9 111.6,640.3 114.7,639.3 117.7,639.2 120.8,638.5 123.8,638.0 126.9,638.7 129.9,639.5 133.0,641.0 136.0,641.6 139.1,641.7 142.1,641.8 145.2,641.3 148.2,641.6 153.1,641.9 156.1,641.6 159.0,641.4 161.9,641.1 164.8,640.0 167.8,640.2 172.7,640.2 175.7,640.1 178.8,639.7 181.8,640.0 184.9,639.6 188.1,640.9 191.4,641.2 194.6,641.3 197.1,639.8 200.1,640.8 203.2,640.7 206.2,641.3 209.3,641.6 212.3,641.3 215.4,641.2 218.4,641.4 221.5,641.2 224.3,641.0 227.1,641.2 229.9,641.8 232.6,641.1 235.4,641.2 238.2,641.8 241.0,641.5 243.9,642.1 246.9,642.3 249.8,642.5 252.7,643.4 255.7,642.9 258.9,642.6 262.2,641.9 265.4,641.9 268.2,641.5 270.9,641.6 273.7,642.0 276.4,641.6 279.2,641.8 281.9,642.2 284.7,641.4 287.4,641.3 292.3,643.0 295.3,643.5 298.4,643.3 301.4,643.0 304.5,643.1 307.1,642.9 309.8,643.3 312.4,642.9 315.1,643.6 317.7,643.8 320.3,643.9 323.0,643.7 325.6,644.0 328.3,643.1 330.9,643.4 333.5,644.1 336.2,643.9 338.8,643.6 341.4,644.2 344.0,643.8 346.6,644.0 349.2,643.5 351.8,643.4 354.3,643.7 356.9,643.3 359.5,643.6 362.1,644.2 364.7,643.5 367.3,643.2 369.8,643.3 372.4,643.4 375.0,644.0 377.6,643.6 380.2,643.5 382.8,643.3 387.7,646.1 390.9,645.3 394.2,644.9 397.4,644.5 400.4,643.8 403.3,643.1 406.2,642.9 409.1,641.7 412.1,640.8 415.0,640.8 417.9,640.0 420.9,640.3 423.8,638.9 426.7,638.9 429.6,638.4 432.6,637.3 435.5,637.1 438.4,635.9 441.4,634.9 444.3,634.6 447.2,633.7 450.2,633.6 453.1,633.0 456.0,633.1 458.8,632.8 461.6,632.2 464.4,631.5 467.2,631.5 470.0,631.2 472.8,631.0 475.5,630.7 478.5,631.1 481.4,630.1 484.3,629.7 487.3,630.3 490.2,629.6 493.0,630.1 495.8,629.7 498.6,630.3 501.4,630.3 504.1,630.7 506.9,630.7 509.7,630.3 512.7,629.2 515.6,629.2 518.5,630.3 521.4,630.1 524.4,629.9 527.4,631.2 530.5,634.3 534.9,629.4 536.6,629.3 539.4,630.2 542.2,630.1 545.9,631.6 549.5,632.9 554.4,630.8 557.5,631.5 560.5,631.0 563.6,628.6 566.6,629.8 570.3,631.0 573.9,631.6 576.8,630.4 579.6,632.1 582.5,630.5 585.3,632.2 588.2,631.6 591.0,630.4 594.1,630.3 597.1,630.9 600.2,630.5 603.2,630.5 606.3,631.5 609.3,630.7 612.4,630.9 615.4,633.3 618.5,631.2 621.6,632.6 624.6,630.8 627.7,631.9 630.7,632.1 633.8,632.6 636.8,632.3 639.9,633.2 643.5,633.5 647.2,636.0 650.0,635.6 652.9,637.0 655.7,637.1 658.6,636.7 661.4,637.1 664.3,636.4 667.0,636.5 669.7,637.7 672.4,637.6 675.1,638.4 677.8,638.0 680.6,637.1 683.3,637.7 686.0,638.6 688.7,638.2 691.7,637.2 694.8,639.0 697.8,639.1 700.9,637.8 704.9,638.7 707.7,638.2 710.6,638.8 713.4,637.6 716.3,637.2 719.1,637.5 722.0,637.8 725.3,637.0 726.9,637.7 729.9,637.7 733.0,637.5 736.0,636.7 739.1,636.1 742.3,636.7 745.6,636.8 748.8,636.2 749.7,636.5 752.9,635.6 756.2,635.5 759.0,636.0 761.9,635.6 765.9,635.2 770.8,633.4 774.1,633.9 777.3,633.1 780.6,632.9 785.4,632.5 788.1,632.3 790.7,632.5 793.3,632.9 795.9,632.7 798.5,632.0 801.1,632.3 803.8,632.5 806.4,632.5 809.0,632.7 811.6,632.5 814.2,632.1 816.8,632.2 819.5,632.8 822.1,632.3 825.7,632.4 829.4,632.2 832.2,632.0 835.1,632.2 837.9,632.2 840.8,632.1 843.6,632.8 846.5,632.5 849.2,632.9 851.9,632.3 854.6,632.9 857.3,632.8 860.0,632.6 862.8,632.4 865.5,632.1 868.2,632.8 870.9,632.4 875.8,631.9 878.6,631.5 881.5,631.6 884.3,631.8 887.2,632.6 890.0,632.0 892.9,632.9 896.1,632.4 899.4,632.6 902.6,632.5" fill="none" stroke="#d020d0" stroke-width="2"/>
<polyline points="82.3,501.8 84.8,504.3 88.4,500.7 92.1,500.1 94.5,500.9 97.0,502.0 99.0,503.1 101.0,505.0 103.1,506.9 105.5,505.5 108.0,504.4 111.6,501.5 113.7,500.5 115.7,499.1 117.7,498.1 120.2,495.7 122.6,492.9 125.0,493.0 127.5,493.1 129.9,493.4 133.6,497.5 136.0,499.3 138.5,501.9 140.5,501.5 142.5,501.8 144.6,501.5 147.0,499.5 149.5,502.0 151.6,501.6 153.7,501.6 155.9,502.0 158.0,502.0 159.2,500.4 161.7,502.0 165.3,501.3 169.0,498.2 171.4,497.9 173.9,498.3 176.3,498.2 178.8,500.1 182.4,498.3 184.5,497.8 186.5,497.7 188.5,497.5 190.6,497.4 192.6,497.2 194.6,497.2 196.6,493.3 199.5,494.1 202.0,492.6 204.4,494.3 206.8,493.1 209.0,493.7 211.1,493.8 213.2,494.0 215.4,494.4 219.0,499.4 221.5,496.6 223.9,494.7 227.6,497.1 230.0,497.5 232.5,497.6 234.9,497.1 237.4,497.5 241.0,499.7 243.2,499.8 245.4,499.5 247.5,499.5 249.7,499.6 251.9,500.1 254.0,499.6 256.2,499.9 258.4,500.0 260.5,500.1 263.0,497.5 265.1,497.5 267.2,497.6 269.3,497.8 271.4,497.4 273.5,497.7 275.5,497.8 277.6,497.8 280.1,499.5 282.1,499.5 284.1,498.4 286.2,498.0 288.4,498.1 290.5,498.3 292.7,498.0 294.9,498.3 297.0,498.1 299.2,498.0 301.4,498.0 303.5,497.9 305.7,497.8 308.2,493.0 310.2,493.3 312.2,493.5 314.3,493.0 316.7,493.5 319.1,494.7 320.0,494.4 322.0,494.0 324.1,493.4 326.1,493.2 328.5,494.2 331.0,494.9 333.4,495.5 335.9,495.9 338.3,497.0 340.8,497.1 342.8,497.3 344.8,497.5 346.9,497.1 348.9,497.5 350.9,497.6 353.0,497.4 354.2,495.1 356.6,494.7 359.1,494.9 361.5,494.7 363.9,495.1 366.1,494.8 368.3,494.9 370.5,495.2 372.6,495.1 374.8,495.2 377.0,494.9 379.1,494.9 381.3,495.0 383.5,494.9 384.7,497.2 386.8,497.3 389.0,497.1 391.1,497.3 393.2,497.6 395.7,495.2 397.8,494.9 399.9,494.8 402.0,494.6 404.1,494.4 406.1,494.4 408.2,494.7 410.3,494.6 414.0,493.1 416.0,493.0 418.1,492.5 420.1,492.1 422.5,490.6 425.0,489.2 427.4,488.7 429.9,488.7 432.3,488.2 434.7,487.6 437.2,487.5 439.6,487.2 442.1,486.7 444.5,486.9 447.0,486.8 449.4,486.9 451.8,486.7 454.3,487.1 456.5,485.5 458.7,484.3 461.4,486.2 464.0,488.5 466.5,492.1 468.9,493.0 471.4,493.5 473.8,494.5 476.2,495.0 478.7,495.4 481.1,495.5 483.6,495.8 486.0,496.7 488.5,497.5 490.9,500.6 493.3,502.5 495.8,503.0 498.2,504.3 500.7,504.4 503.1,506.7 505.5,507.3 508.0,506.2 510.4,507.2 512.9,507.3 515.3,507.3 517.8,506.9 520.2,509.9 522.2,510.1 524.3,511.2 526.3,511.3 529.5,516.8 532.4,507.4 536.1,507.0 539.7,513.4 542.2,511.3 544.6,511.7 547.1,512.5 549.5,513.2 551.9,515.5 554.4,516.1 556.8,515.2 559.3,512.6 562.1,511.9 565.0,509.2 566.6,510.2 568.8,512.7 571.1,515.6 574.8,510.3 578.4,509.1 580.5,509.5 582.5,511.6 584.5,512.1 587.0,510.4 589.4,507.9 591.9,504.4 594.0,506.1 596.1,503.1 598.3,504.0 600.4,503.3 602.8,501.2 606.5,507.7 610.2,512.3 613.8,507.2 616.3,508.7 618.7,510.0 621.2,508.0 623.6,509.0 626.0,507.1 628.5,506.6 630.9,506.5 633.4,507.7 635.8,508.2 638.2,511.0 640.7,511.1 643.1,510.9 645.6,508.4 648.0,507.9 650.4,505.8 652.9,504.2 655.3,503.0 657.8,501.6 660.2,500.2 662.7,499.6 665.1,498.2 667.5,497.3 670.0,496.7 672.4,495.8 674.9,494.6 677.3,494.0 679.7,493.2 682.0,492.9 684.3,492.9 686.5,492.8 688.8,492.8 691.1,493.2 693.3,492.9 695.6,493.2 698.1,495.6 700.2,494.4 702.3,493.2 704.5,492.6 706.6,491.2 708.7,491.2 710.9,491.1 713.0,491.5 715.1,491.2 717.3,491.1 719.4,491.2 721.6,491.0 723.7,491.3 724.9,488.0 726.1,491.1 728.2,491.4 730.2,491.4 732.2,491.0 734.3,491.3 736.3,491.1 738.3,491.5 739.6,488.2 740.8,491.1 742.8,491.1 744.9,491.0 746.9,491.5 748.1,488.0 750.5,491.3 752.7,491.2 754.9,491.3 757.1,491.3 759.3,491.4 761.5,491.0 764.0,488.6 766.4,485.5 768.6,485.4 770.8,485.0 773.1,484.8 775.3,484.6 777.5,484.4 779.7,484.0 781.9,484.0 783.9,483.9 786.0,483.6 788.0,483.7 790.1,483.8 792.1,484.1 794.2,484.1 796.2,483.9 798.3,483.6 800.3,484.0 801.6,480.9 803.8,481.0 806.0,481.1 808.2,481.0 810.5,480.9 812.7,481.2 814.9,480.9 817.1,480.9 819.4,481.2 820.6,483.7 822.5,480.8 825.1,481.1 826.3,483.6 828.2,481.1 830.8,481.1 832.1,483.8 835.9,483.7 837.1,481.1 839.4,481.2 841.6,480.7 843.8,480.9 846.0,481.0 848.2,480.9 850.5,480.8 851.7,483.7 853.8,483.9 855.8,484.1 857.8,483.6 859.9,483.7 861.9,484.1 863.9,484.0 865.9,484.0 868.0,483.6 870.0,484.0 872.0,484.2 873.3,481.2 875.5,481.1 877.6,480.7 879.8,481.2 881.9,480.8 884.1,481.0 886.3,481.2 888.4,481.1 890.6,480.7 892.7,480.8 894.9,481.2 896.8,478.6 899.7,478.9 902.5,478.8" fill="none" stroke="#1a1aff" stroke-width="2"/>
<rect x="80" y="664.5" width="824" height="3" fill="#ff0000"/>
<line x1="323" y1="645" x2="323" y2="668" stroke="#ffff00" stroke-width="1.2" stroke-dasharray="1.5 1"/>
<line x1="737.5" y1="645" x2="737.5" y2="668" stroke="#ffff00" stroke-width="1.2" stroke-dasharray="1.5 1"/>
</g>
<text x="303.4" y="645" fill="#f0f030" font-size="9.5" text-anchor="start" textLength="36.6" lengthAdjust="spacingAndGlyphs" font-family="Liberation Sans, sans-serif">Sun Rise</text>
<text x="306" y="683.5" fill="#0000ff" font-size="9.2" text-anchor="start" textLength="31.6" lengthAdjust="spacingAndGlyphs" font-family="Liberation Sans, sans-serif">Sun Rise</text>
<text x="723" y="683.5" fill="#0000ff" font-size="9.2" text-anchor="start" textLength="26.7" lengthAdjust="spacingAndGlyphs" font-family="Liberation Sans, sans-serif">Sun Set</text>
<rect x="0" y="0" width="2" height="695" fill="#000"/>
<rect x="0" y="1" width="1005" height="1" fill="#000"/>
<rect x="1003" y="1" width="2" height="694" fill="#000"/>
<rect x="0" y="694" width="1005" height="1" fill="#000"/>
</svg>
</body></html>
